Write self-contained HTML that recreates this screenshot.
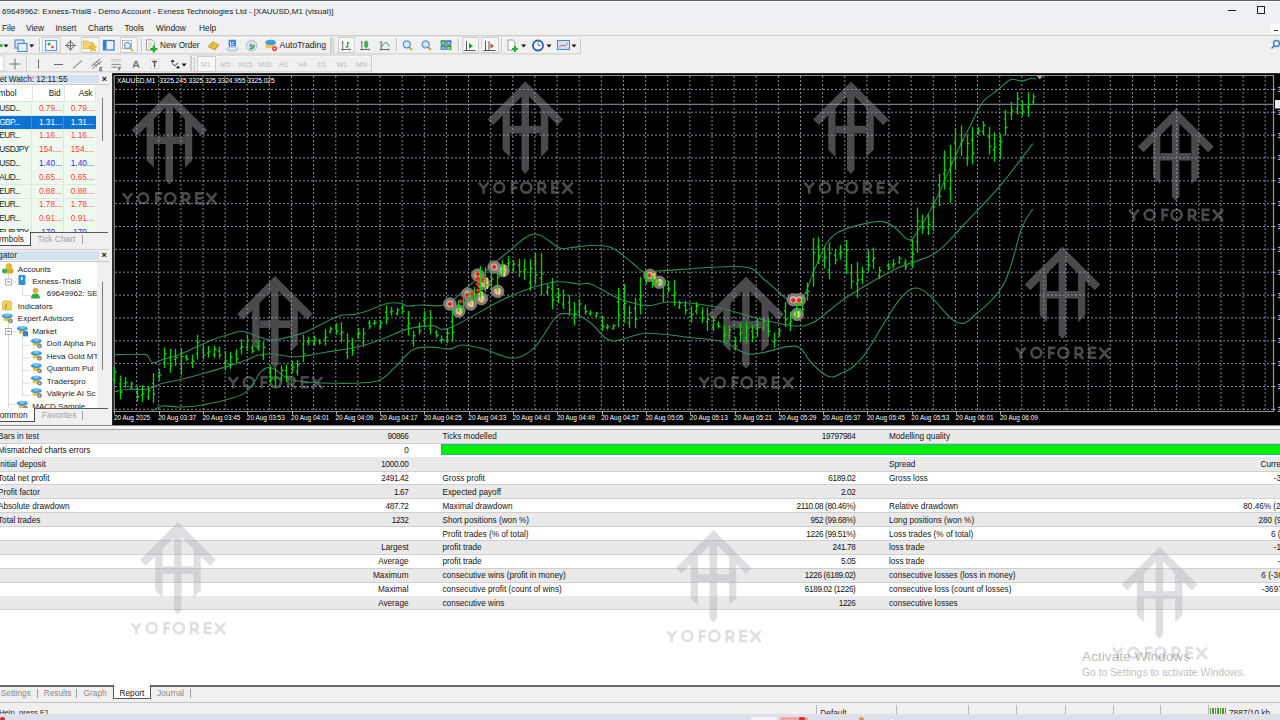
<!DOCTYPE html>
<html><head><meta charset="utf-8"><title>MT4</title>
<style>
*{box-sizing:border-box}
html,body{margin:0;padding:0}
body{width:1280px;height:720px;overflow:hidden;position:relative;background:#f0f0f0;font-family:"Liberation Sans", sans-serif;font-size:8.3px;color:#141414}
.a{position:absolute;white-space:nowrap}
.t{position:absolute;white-space:nowrap;line-height:10px}
.r{text-align:right}
.sep{position:absolute;width:1px;background:#c8c8c8;border-right:1px solid #fff}
.pr{position:absolute;border:1px solid #cfcfcf;background:#f7f7f7}
.dd{position:absolute;width:0;height:0;border-left:2.5px solid transparent;border-right:2.5px solid transparent;border-top:3px solid #111}
.gt{color:#ababab}
</style></head><body>

<div class="a" style="left:0;top:0;width:1280px;height:1.2px;background:#5a6166"></div>
<div class="a" style="left:0;top:1.2px;width:1280px;height:20.2px;background:#edf1f6"></div>
<div class="a" style="left:0;top:1.3px;width:1280px;height:0.9px;background:#ffffff"></div>
<div class="t" style="left:2px;top:6.6px;font-size:8.05px;color:#1a1a1a">69649962: Exness-Trial8 - Demo Account - Exness Technologies Ltd - [XAUUSD,M1 (visual)]</div>
<div class="a" style="left:1228px;top:10px;width:8px;height:1px;background:#222"></div>
<div class="a" style="left:1257px;top:6px;width:8px;height:8px;border:1px solid #222"></div>

<div class="t" style="left:2px;top:23px;font-size:8.4px;color:#1a1a1a">File</div>
<div class="t" style="left:26px;top:23px;font-size:8.4px;color:#1a1a1a">View</div>
<div class="t" style="left:55.5px;top:23px;font-size:8.4px;color:#1a1a1a">Insert</div>
<div class="t" style="left:88px;top:23px;font-size:8.4px;color:#1a1a1a">Charts</div>
<div class="t" style="left:124.5px;top:23px;font-size:8.4px;color:#1a1a1a">Tools</div>
<div class="t" style="left:156px;top:23px;font-size:8.4px;color:#1a1a1a">Window</div>
<div class="t" style="left:199px;top:23px;font-size:8.4px;color:#1a1a1a">Help</div>
<div class="a" style="left:1271px;top:23.7px;width:9px;height:10px;background:#fff"></div><div class="a" style="left:1273.5px;top:29.5px;width:4px;height:1.2px;background:#333"></div>
<div class="a" style="left:0;top:35px;width:1280px;height:1px;background:#cfcfcf"></div>
<svg class="a" style="left:0;top:35px" width="1280" height="38" viewBox="0 35 1280 38"><path d="M0 53.9H330.5V37M330 37.1H0" stroke="#cdcdcd" fill="none"/><path d="M0 37.6H330" stroke="#fbfbfb"/><path d="M331 53.9H580.5V37M331.5 54V37.1H580" stroke="#cdcdcd" fill="none"/><path d="M332 37.6H580" stroke="#fbfbfb"/><rect x="42.5" y="37.5" width="17.6" height="15" fill="#f7f7f7" stroke="#cdcdcd"/><rect x="81.5" y="37.5" width="17.5" height="15" fill="#f7f7f7" stroke="#cdcdcd"/><rect x="120.5" y="37.5" width="16.80000000000001" height="15" fill="#f7f7f7" stroke="#cdcdcd"/><rect x="338.5" y="37.5" width="15.800000000000011" height="15" fill="#f7f7f7" stroke="#cdcdcd"/><rect x="462.9" y="37.5" width="15.600000000000023" height="15" fill="#f7f7f7" stroke="#cdcdcd"/><rect x="481.9" y="37.5" width="16.600000000000023" height="15" fill="#f7f7f7" stroke="#cdcdcd"/><path d="M39.5 38V52" stroke="#c4c4c4"/><path d="M40.5 38V52" stroke="#fff"/><path d="M141.5 38V52" stroke="#c4c4c4"/><path d="M142.5 38V52" stroke="#fff"/><path d="M396.5 38V52" stroke="#c4c4c4"/><path d="M397.5 38V52" stroke="#fff"/><path d="M458.5 38V52" stroke="#c4c4c4"/><path d="M459.5 38V52" stroke="#fff"/><path d="M501.5 38V52" stroke="#c4c4c4"/><path d="M502.5 38V52" stroke="#fff"/><path d="M333.5 38.5V52" stroke="#b0b0b0" stroke-width="1.2" stroke-dasharray="1,0.8"/><path d="M3.5 44.5h5l-2.5 3z" fill="#111"/><path d="M29.2 44.5h5l-2.5 3z" fill="#111"/><path d="M521.1 44.5h5l-2.5 3z" fill="#111"/><path d="M546.5 44.5h5l-2.5 3z" fill="#111"/><path d="M571.5 44.5h5l-2.5 3z" fill="#111"/><rect x="0" y="44" width="2.5" height="3" fill="#2db83d"/><rect x="15" y="40" width="9" height="8" fill="#dbe8f8" stroke="#3f7fd0"/><rect x="18" y="43.5" width="9" height="8" fill="#e8f0fb" stroke="#3f7fd0"/><rect x="45.5" y="40.5" width="11" height="10" fill="#fff" stroke="#5a9be0" stroke-width="1.2"/><circle cx="49" cy="44" r="1.6" fill="#28a745"/><circle cx="52.5" cy="47" r="1.6" fill="#e8603c"/><path d="M70.5 40v11M65 45.5h11" stroke="#707070" stroke-width="1"/><rect x="67.5" y="42.5" width="6" height="6" fill="none" stroke="#7a7a7a" transform="rotate(45 70.5 45.5)"/><path d="M83 41h5l1 1.5h4v6h-10z" fill="#f2d46a" stroke="#c9a640" stroke-width="0.6"/><path d="M93 43.5l1.2 2.6 2.8.3-2.1 1.9.6 2.8-2.5-1.4-2.5 1.4.6-2.8-2.1-1.9 2.8-.3z" fill="#f3c431" stroke="#b78c10" stroke-width="0.4"/><rect x="103.5" y="40.5" width="10.5" height="9.5" fill="#e9f1fb" stroke="#3a78c8" stroke-width="1.2"/><rect x="104" y="41" width="2.5" height="8.5" fill="#3a78c8"/><rect x="122.5" y="40.5" width="9" height="8" fill="#fff" stroke="#8a8a8a" stroke-width="0.6"/><circle cx="127.5" cy="45.5" r="3.2" fill="#dbe8f5" stroke="#4b86c8" stroke-width="1"/><path d="M130 48l3 3" stroke="#d49b2a" stroke-width="1.6"/><path d="M146.5 39.8h5.5l2.5 2.5v7.8h-8z" fill="#fbfbfb" stroke="#7a7a7a" stroke-width="0.7"/><path d="M148 43h4M148 45h4M148 47h3" stroke="#9a9a9a" stroke-width="0.6"/><path d="M153.8 45.6v7M150.3 49.1h7" stroke="#22b035" stroke-width="2.3"/><path d="M208 46.6l5-5.2 6 3.2-4 5.2z" fill="#e6bd3a" stroke="#8a6a10" stroke-width="0.6"/><path d="M213 41.4l6 3.2" stroke="#f6e08a" stroke-width="0.8"/><ellipse cx="232.4" cy="49" rx="5.6" ry="2.2" fill="#dfe6f0" stroke="#7f9cc4" stroke-width="0.7"/><rect x="228.6" y="39.8" width="7.4" height="6.4" rx="0.8" fill="#3c8ad8"/><path d="M230.5 41.5v3.2h3.4M232 42.6h2" stroke="#fff" stroke-width="0.8" fill="none"/><circle cx="251.6" cy="45.6" r="5.4" fill="#d4e2ec" stroke="#9fb6c8" stroke-width="0.8"/><path d="M249.8 48.6q3.6 0.4 4.4-3.6" stroke="#3aa04a" stroke-width="1.6" fill="none"/><circle cx="251" cy="45.4" r="1.4" fill="#6a8aa8"/><path d="M265.6 42.6h10v5.6h-10z" fill="#f0c84a"/><ellipse cx="270.6" cy="42.4" rx="5.2" ry="2.6" fill="#3f9ee0"/><circle cx="274.6" cy="48.6" r="2.9" fill="#e23434" stroke="#fff" stroke-width="0.6"/><circle cx="274.6" cy="48.6" r="1" fill="#fff"/><path d="M342.7 41.5V50.5M341.2 49.5H350.7" stroke="#5a5a5a" stroke-width="0.9" fill="none"/><path d="M341.7 42.5l1-1.2 1 1.2M349.7 48.5l1.2 1-1.2 1" stroke="#5a5a5a" stroke-width="0.6" fill="none"/><path d="M347.6 42v5.2M345.6 47.2h2M347.6 42.6h1.6" stroke="#1aa83a" stroke-width="1.3" fill="none"/><path d="M361.8 41.5V50.5M360.3 49.5H369.8" stroke="#5a5a5a" stroke-width="0.9" fill="none"/><path d="M360.8 42.5l1-1.2 1 1.2M368.8 48.5l1.2 1-1.2 1" stroke="#5a5a5a" stroke-width="0.6" fill="none"/><path d="M366.2 40.2v8.2" stroke="#138a2a" stroke-width="0.7"/><rect x="364.6" y="41.6" width="3.2" height="5.6" rx="1.2" fill="#2ac24a" stroke="#128a2a" stroke-width="0.5"/><path d="M381.1 41.5V50.5M379.6 49.5H389.1" stroke="#5a5a5a" stroke-width="0.9" fill="none"/><path d="M380.1 42.5l1-1.2 1 1.2M388.1 48.5l1.2 1-1.2 1" stroke="#5a5a5a" stroke-width="0.6" fill="none"/><path d="M381.2 47.6Q383 44.2 385 42.8T389.2 46.4" stroke="#3aa55a" stroke-width="1" fill="none"/><path d="M409 47l3 3" stroke="#c9a83a" stroke-width="2"/><circle cx="406.8" cy="44.4" r="3.7" fill="#bfdcf4" stroke="#3b86d0" stroke-width="1"/><path d="M405 44.4h3.6M406.8 42.6v3.6" stroke="#fff" stroke-width="1"/><path d="M427.9 47l3 3" stroke="#c9a83a" stroke-width="2"/><circle cx="425.7" cy="44.4" r="3.7" fill="#bfdcf4" stroke="#3b86d0" stroke-width="1"/><path d="M423.9 44.4h3.6" stroke="#fff" stroke-width="1"/><rect x="440.6" y="40.2" width="5.2" height="4.6" fill="#2f9a3a"/><rect x="446.2" y="40.2" width="5.2" height="4.6" fill="#3a78d0"/><rect x="440.6" y="45.2" width="5.2" height="4.6" fill="#3a78d0"/><rect x="446.2" y="45.2" width="5.2" height="4.6" fill="#2f9a3a"/><path d="M441.8 43h2.8M447.4 43h2.8M441.8 48h2.8M447.4 48h2.8" stroke="#fff" stroke-width="1"/><path d="M464.5 50.5h11M466.5 41v10" stroke="#444" stroke-width="0.9"/><path d="M469 43l4 3-4 3z" fill="#1f9c3a"/><path d="M483.5 50.5h12M485.5 41v10M489 41v10" stroke="#444" stroke-width="0.9"/><path d="M494 46l-3.5-2.5v5z" fill="#d23a3a"/><path d="M508 40h5l2 2v8h-7z" fill="#fff" stroke="#777" stroke-width="0.7"/><path d="M515 46v6M512 49h6" stroke="#27b03a" stroke-width="2.2"/><circle cx="538" cy="45.5" r="5" fill="#fff" stroke="#1f5fbf" stroke-width="1.8"/><path d="M538 42.5v3h2.5" stroke="#1f5fbf" stroke-width="0.8" fill="none"/><rect x="557.5" y="40.5" width="12" height="9" fill="#cfe2f5" stroke="#4a86c8"/><path d="M559 47l3-2 3 1 3-3" stroke="#d84a3a" stroke-width="0.8" fill="none"/><circle cx="1276.5" cy="43.5" r="3" fill="none" stroke="#3e7ed0" stroke-width="1.4"/><path d="M1274.5 45.5l-3 3" stroke="#3e7ed0" stroke-width="1.6"/><path d="M0 71.8H190.5V55.5" stroke="#cdcdcd" fill="none"/><path d="M191.5 71.8V55.5H371.5V71.8H191.5" stroke="#cdcdcd" fill="none"/><path d="M192 56.1H371" stroke="#fbfbfb"/><rect x="-1" y="56" width="5" height="15" fill="#fbfbfb" stroke="#d0d0d0"/><path d="M15 58.5v11M9.5 64h11" stroke="#6a6a6a" stroke-width="0.9"/><path d="M26.5 57V71" stroke="#c4c4c4"/><path d="M27.5 57V71" stroke="#fff"/><path d="M38.5 59.5v9" stroke="#6a6a6a"/><path d="M54 64.5h9" stroke="#6a6a6a"/><path d="M73 68.5l9-8" stroke="#6a6a6a"/><path d="M91.2 66.2l9.2-7.4M92.4 68.6l9.2-7.4M94.2 64l3 2.6M96.8 61.8l3 2.6" stroke="#5a5a5a" stroke-width="0.9" fill="none"/><path d="M102.4 67.6h-2.6v3.2h2.6M99.8 69.2h2.2" stroke="#4a4a4a" stroke-width="0.8" fill="none"/><path d="M111.4 59.6h9.4M111.4 61.2h9.4" stroke="#a8a8a8" stroke-width="0.8" stroke-dasharray="1.2,0.5"/><path d="M111.4 64.4h9.4M111.4 67.2h6" stroke="#6a6a6a" stroke-width="0.8"/><path d="M121 67.2h-2.2v3.4M118.8 68.8h1.8" stroke="#4a4a4a" stroke-width="0.8" fill="none"/><path d="M133.2 67.8L135.6 61.4h0.9L139 67.8M134.3 65.6h3.6" stroke="#6a6a6a" stroke-width="1.3" fill="none"/><rect x="150.5" y="59.5" width="8.2" height="9" fill="#fafafa" stroke="#b8b8b8" stroke-width="0.7" stroke-dasharray="1,0.6"/><path d="M152.2 61.6h4.8M154.6 61.6v5.6" stroke="#555" stroke-width="1.5" fill="none"/><path d="M170.6 61.2l2-1.6 2 1.6-2 1.6z" fill="#333"/><path d="M176 67.4l2-1.6 2 1.6-2 1.6z" fill="#333"/><path d="M172.4 63.6l2.4 2.2 3.4-3" stroke="#333" stroke-width="1" fill="none"/><path d="M181.5 63.5h5l-2.5 3z" fill="#111"/><path d="M194.2 57.5V71" stroke="#b0b0b0" stroke-width="1.2" stroke-dasharray="1,0.8"/><rect x="197.5" y="56.5" width="18" height="15" fill="#f7f7f7" stroke="#cdcdcd"/></svg>
<div class="t" style="left:160px;top:40.5px;font-size:8.2px;color:#1a1a1a">New Order</div>
<div class="t" style="left:279.5px;top:39.7px;font-size:8.6px;color:#1a1a1a">AutoTrading</div>
<div class="t gt" style="left:201px;top:59.6px;font-size:7px;color:#bdbdbd">M1</div>
<div class="t gt" style="left:220.6px;top:59.6px;font-size:7px;color:#bdbdbd">M5</div>
<div class="t gt" style="left:238.6px;top:59.6px;font-size:7px;color:#bdbdbd">M15</div>
<div class="t gt" style="left:258px;top:59.6px;font-size:7px;color:#bdbdbd">M30</div>
<div class="t gt" style="left:279px;top:59.6px;font-size:7px;color:#bdbdbd">H1</div>
<div class="t gt" style="left:298px;top:59.6px;font-size:7px;color:#bdbdbd">H4</div>
<div class="t gt" style="left:317.5px;top:59.6px;font-size:7px;color:#bdbdbd">D1</div>
<div class="t gt" style="left:337px;top:59.6px;font-size:7px;color:#bdbdbd">W1</div>
<div class="t gt" style="left:355.8px;top:59.6px;font-size:7px;color:#bdbdbd">MN</div>
<div class="a" style="left:0;top:73px;width:112px;height:352px;background:#f0f0f0"></div><div class="a" style="left:0;top:74.8px;width:99px;height:8.4px;background:#d3e1f1"></div><div class="t r" style="left:-60px;top:75px;width:127.5px;font-size:8.2px;color:#222">Market Watch: 12:11:55</div><div class="t" style="left:101.8px;top:74px;font-size:9px;color:#111;font-weight:bold">&#215;</div><div class="a" style="left:0;top:84px;width:109px;height:1px;background:#c9c9c9"></div><div class="a" style="left:0;top:85.3px;width:96px;height:15.7px;background:#fff"></div><div class="a" style="left:32.4px;top:85.5px;width:1px;height:15.5px;background:#e3e3e3"></div><div class="a" style="left:63.9px;top:85.5px;width:1px;height:15.5px;background:#e3e3e3"></div><div class="a" style="left:95.4px;top:85.5px;width:1px;height:15.5px;background:#e3e3e3"></div><div class="a" style="left:0;top:101px;width:96px;height:1px;background:#e3e3e3"></div><div class="t r" style="left:-30px;top:87.8px;width:46.5px;font-size:8.3px">Symbol</div><div class="t r" style="left:20px;top:87.8px;width:40.7px;font-size:8.3px">Bid</div><div class="t r" style="left:50px;top:87.8px;width:42.5px;font-size:8.3px">Ask</div><div class="a" style="left:0;top:73px;width:111px;height:159.3px;overflow:hidden"><div class="a" style="left:0;top:29.00px;width:96px;height:13.3px;background:#effaef"></div><div class="a" style="left:31.2px;top:29.00px;width:1px;height:13.8px;background:#dde8dd"></div><div class="a" style="left:63.1px;top:29.00px;width:1px;height:13.8px;background:#dde8dd"></div><div class="a" style="left:0;top:42.30px;width:96px;height:0.6px;background:#dfe8df"></div><div class="t" style="left:-0.8px;top:29.70px;font-size:8.3px;letter-spacing:-0.55px;color:#1e1e1e">USD...</div><div class="t r" style="left:20px;top:29.70px;width:42px;font-size:8.3px;color:#ff3c3c">0.79...</div><div class="t r" style="left:50px;top:29.70px;width:43.8px;font-size:8.3px;color:#ff3c3c">0.79...</div><div class="a" style="left:0;top:42.80px;width:96px;height:13.3px;background:#0a73d4"></div><div class="a" style="left:31.2px;top:42.80px;width:1px;height:13.3px;background:#3d8fdc"></div><div class="a" style="left:63.1px;top:42.80px;width:1px;height:13.3px;background:#3d8fdc"></div><div class="t" style="left:-0.8px;top:43.50px;font-size:8.3px;letter-spacing:-0.55px;color:#ffffff">GBP...</div><div class="t r" style="left:20px;top:43.50px;width:42px;font-size:8.3px;color:#ffffff">1.31...</div><div class="t r" style="left:50px;top:43.50px;width:43.8px;font-size:8.3px;color:#ffffff">1.31...</div><div class="a" style="left:0;top:56.60px;width:96px;height:13.3px;background:#effaef"></div><div class="a" style="left:31.2px;top:56.60px;width:1px;height:13.8px;background:#dde8dd"></div><div class="a" style="left:63.1px;top:56.60px;width:1px;height:13.8px;background:#dde8dd"></div><div class="a" style="left:0;top:69.90px;width:96px;height:0.6px;background:#dfe8df"></div><div class="t" style="left:-0.8px;top:57.30px;font-size:8.3px;letter-spacing:-0.55px;color:#1e1e1e">EUR...</div><div class="t r" style="left:20px;top:57.30px;width:42px;font-size:8.3px;color:#ff3c3c">1.16...</div><div class="t r" style="left:50px;top:57.30px;width:43.8px;font-size:8.3px;color:#ff3c3c">1.16...</div><div class="a" style="left:0;top:70.40px;width:96px;height:13.3px;background:#effaef"></div><div class="a" style="left:31.2px;top:70.40px;width:1px;height:13.8px;background:#dde8dd"></div><div class="a" style="left:63.1px;top:70.40px;width:1px;height:13.8px;background:#dde8dd"></div><div class="a" style="left:0;top:83.70px;width:96px;height:0.6px;background:#dfe8df"></div><div class="t" style="left:-0.8px;top:71.10px;font-size:8.3px;letter-spacing:-0.55px;color:#1e1e1e">USDJPY</div><div class="t r" style="left:20px;top:71.10px;width:42px;font-size:8.3px;color:#ff3c3c">154....</div><div class="t r" style="left:50px;top:71.10px;width:43.8px;font-size:8.3px;color:#ff3c3c">154....</div><div class="a" style="left:0;top:84.20px;width:96px;height:13.3px;background:#effaef"></div><div class="a" style="left:31.2px;top:84.20px;width:1px;height:13.8px;background:#dde8dd"></div><div class="a" style="left:63.1px;top:84.20px;width:1px;height:13.8px;background:#dde8dd"></div><div class="a" style="left:0;top:97.50px;width:96px;height:0.6px;background:#dfe8df"></div><div class="t" style="left:-0.8px;top:84.90px;font-size:8.3px;letter-spacing:-0.55px;color:#1e1e1e">USD...</div><div class="t r" style="left:20px;top:84.90px;width:42px;font-size:8.3px;color:#2b2bf0">1.40...</div><div class="t r" style="left:50px;top:84.90px;width:43.8px;font-size:8.3px;color:#2b2bf0">1.40...</div><div class="a" style="left:0;top:98.00px;width:96px;height:13.3px;background:#effaef"></div><div class="a" style="left:31.2px;top:98.00px;width:1px;height:13.8px;background:#dde8dd"></div><div class="a" style="left:63.1px;top:98.00px;width:1px;height:13.8px;background:#dde8dd"></div><div class="a" style="left:0;top:111.30px;width:96px;height:0.6px;background:#dfe8df"></div><div class="t" style="left:-0.8px;top:98.70px;font-size:8.3px;letter-spacing:-0.55px;color:#1e1e1e">AUD...</div><div class="t r" style="left:20px;top:98.70px;width:42px;font-size:8.3px;color:#ff3c3c">0.65...</div><div class="t r" style="left:50px;top:98.70px;width:43.8px;font-size:8.3px;color:#ff3c3c">0.65...</div><div class="a" style="left:0;top:111.80px;width:96px;height:13.3px;background:#effaef"></div><div class="a" style="left:31.2px;top:111.80px;width:1px;height:13.8px;background:#dde8dd"></div><div class="a" style="left:63.1px;top:111.80px;width:1px;height:13.8px;background:#dde8dd"></div><div class="a" style="left:0;top:125.10px;width:96px;height:0.6px;background:#dfe8df"></div><div class="t" style="left:-0.8px;top:112.50px;font-size:8.3px;letter-spacing:-0.55px;color:#1e1e1e">EUR...</div><div class="t r" style="left:20px;top:112.50px;width:42px;font-size:8.3px;color:#ff3c3c">0.88...</div><div class="t r" style="left:50px;top:112.50px;width:43.8px;font-size:8.3px;color:#ff3c3c">0.88...</div><div class="a" style="left:0;top:125.60px;width:96px;height:13.3px;background:#effaef"></div><div class="a" style="left:31.2px;top:125.60px;width:1px;height:13.8px;background:#dde8dd"></div><div class="a" style="left:63.1px;top:125.60px;width:1px;height:13.8px;background:#dde8dd"></div><div class="a" style="left:0;top:138.90px;width:96px;height:0.6px;background:#dfe8df"></div><div class="t" style="left:-0.8px;top:126.30px;font-size:8.3px;letter-spacing:-0.55px;color:#1e1e1e">EUR...</div><div class="t r" style="left:20px;top:126.30px;width:42px;font-size:8.3px;color:#ff3c3c">1.78...</div><div class="t r" style="left:50px;top:126.30px;width:43.8px;font-size:8.3px;color:#ff3c3c">1.78...</div><div class="a" style="left:0;top:139.40px;width:96px;height:13.3px;background:#effaef"></div><div class="a" style="left:31.2px;top:139.40px;width:1px;height:13.8px;background:#dde8dd"></div><div class="a" style="left:63.1px;top:139.40px;width:1px;height:13.8px;background:#dde8dd"></div><div class="a" style="left:0;top:152.70px;width:96px;height:0.6px;background:#dfe8df"></div><div class="t" style="left:-0.8px;top:140.10px;font-size:8.3px;letter-spacing:-0.55px;color:#1e1e1e">EUR...</div><div class="t r" style="left:20px;top:140.10px;width:42px;font-size:8.3px;color:#ff3c3c">0.91...</div><div class="t r" style="left:50px;top:140.10px;width:43.8px;font-size:8.3px;color:#ff3c3c">0.91...</div><div class="a" style="left:0;top:153.20px;width:96px;height:13.3px;background:#effaef"></div><div class="a" style="left:31.2px;top:153.20px;width:1px;height:13.8px;background:#dde8dd"></div><div class="a" style="left:63.1px;top:153.20px;width:1px;height:13.8px;background:#dde8dd"></div><div class="a" style="left:0;top:166.50px;width:96px;height:0.6px;background:#dfe8df"></div><div class="t" style="left:-0.8px;top:153.90px;font-size:8.3px;letter-spacing:-0.55px;color:#1e1e1e">EURJPY</div><div class="t r" style="left:20px;top:153.90px;width:42px;font-size:8.3px;color:#2b2bf0">170...</div><div class="t r" style="left:50px;top:153.90px;width:43.8px;font-size:8.3px;color:#2b2bf0">170...</div></div><div class="a" style="left:102px;top:97.5px;width:1px;height:43.5px;background:#7a7a7a"></div><div class="a" style="left:30px;top:232px;width:78px;height:1.3px;background:#5a5a5a"></div><div class="a" style="left:0;top:232px;width:31px;height:14px;background:#fff;border-right:1.3px solid #4a4a4a;border-bottom:1.3px solid #4a4a4a"></div><div class="t r" style="left:-20px;top:234px;width:44px;font-size:8.4px;color:#1a1a1a">Symbols</div><div class="t" style="left:37.5px;top:234px;font-size:8.4px;color:#a0a0a0">Tick Chart</div><div class="a" style="left:82px;top:235px;width:1px;height:9px;background:#a0a0a0"></div><div class="a" style="left:0;top:249px;width:109px;height:1px;background:#d0d0d0"></div><div class="a" style="left:0;top:250.6px;width:99px;height:9.4px;background:#d3e1f1"></div><div class="t r" style="left:-30px;top:250.3px;width:47px;font-size:8.3px;color:#222">Navigator</div><div class="t" style="left:101.6px;top:250.3px;font-size:9px;color:#111;font-weight:bold">&#215;</div><div class="a" style="left:0;top:260.5px;width:109px;height:1px;background:#c9c9c9"></div><div class="a" style="left:0;top:261.5px;width:97px;height:146.6px;background:#fff"></div><div class="a" style="left:102px;top:282px;width:1px;height:88px;background:#7a7a7a"></div><svg class="a" style="left:0;top:261.5px" width="97" height="146.6" viewBox="0 261.5 97 146.6"><path d="M8.5 273V278M22.5 286V295H30M8.5 322V408M8.5 331H16M22.5 336V395M22.5 345H30M22.5 357.5H30M22.5 370H30M22.5 382.5H30M22.5 395H30M8.5 404H16M11 281.5H17" stroke="#a8a8a8" stroke-width="0.8" stroke-dasharray="1,1" fill="none"/><rect x="5.5" y="278.5" width="6" height="6" fill="#fff" stroke="#9a9a9a" stroke-width="0.8"/><path d="M7.0 281.5h3" stroke="#3060c0" stroke-width="0.8"/><rect x="5.5" y="328" width="6" height="6" fill="#fff" stroke="#9a9a9a" stroke-width="0.8"/><path d="M7.0 331h3" stroke="#3060c0" stroke-width="0.8"/><circle cx="9" cy="266.1" r="3.3" fill="#e6b832"/><rect x="5" y="268.1" width="8.5" height="5" rx="2" fill="#d9a82a"/><circle cx="4.5" cy="270.6" r="2.5" fill="#2fb84a"/><text x="17.8" y="271.10" font-size="8.05" fill="#1e1e1e" font-family="Liberation Sans">Accounts</text><rect x="18.5" y="274.55" width="7" height="10" rx="1" fill="#2f8fe0"/><rect x="21" y="276.55" width="1.5" height="3" fill="#fff"/><text x="32.2" y="283.55" font-size="8.05" fill="#1e1e1e" font-family="Liberation Sans">Exness-Trial8</text><circle cx="35.5" cy="290.0" r="2.7" fill="#e8b030"/><path d="M31 298.0q0-5 4.5-5q4.5 0 4.5 5z" fill="#2fb040"/><text x="46.7" y="296.00" font-size="8.05" fill="#1e1e1e" font-family="Liberation Sans">69649962: SEC</text><rect x="2.5" y="300.45000000000005" width="9" height="9" rx="1.5" fill="#f3d55a" stroke="#c8a030" stroke-width="0.6"/><text x="5" y="307.95000000000005" font-size="7" font-style="italic" fill="#6a5010" font-family="Liberation Serif">f</text><text x="17.8" y="308.45" font-size="8.05" fill="#1e1e1e" font-family="Liberation Sans">Indicators</text><ellipse cx="7" cy="318.70000000000005" rx="3.4" ry="2" fill="#efc030"/><ellipse cx="7.3" cy="315.50000000000006" rx="5.4" ry="2.5" fill="#3a9be2"/><ellipse cx="7.3" cy="314.50000000000006" rx="2.8" ry="1.5" fill="#7cc4f4"/><circle cx="10.6" cy="320.50000000000006" r="2.1" fill="#8a8a8a" stroke="#5a5a5a" stroke-width="0.4"/><circle cx="10.6" cy="320.50000000000006" r="0.7" fill="#e8e8e8"/><text x="17.8" y="320.90" font-size="8.05" fill="#1e1e1e" font-family="Liberation Sans">Expert Advisors</text><ellipse cx="22" cy="331.15000000000003" rx="3.4" ry="2" fill="#efc030"/><ellipse cx="22.3" cy="327.95000000000005" rx="5.4" ry="2.5" fill="#3a9be2"/><ellipse cx="22.3" cy="326.95000000000005" rx="2.8" ry="1.5" fill="#7cc4f4"/><circle cx="25.6" cy="332.95000000000005" r="2.1" fill="#8a8a8a" stroke="#5a5a5a" stroke-width="0.4"/><circle cx="25.6" cy="332.95000000000005" r="0.7" fill="#e8e8e8"/><rect x="23" y="330.85" width="5" height="5" fill="#3a7ad8"/><text x="32.2" y="333.35" font-size="8.05" fill="#1e1e1e" font-family="Liberation Sans">Market</text><ellipse cx="36" cy="343.6" rx="3.4" ry="2" fill="#efc030"/><ellipse cx="36.3" cy="340.40000000000003" rx="5.4" ry="2.5" fill="#3a9be2"/><ellipse cx="36.3" cy="339.40000000000003" rx="2.8" ry="1.5" fill="#7cc4f4"/><circle cx="39.6" cy="345.40000000000003" r="2.1" fill="#8a8a8a" stroke="#5a5a5a" stroke-width="0.4"/><circle cx="39.6" cy="345.40000000000003" r="0.7" fill="#e8e8e8"/><text x="46.7" y="345.80" font-size="8.05" fill="#1e1e1e" font-family="Liberation Sans">DoIt Alpha Pu</text><ellipse cx="36" cy="356.05" rx="3.4" ry="2" fill="#efc030"/><ellipse cx="36.3" cy="352.85" rx="5.4" ry="2.5" fill="#3a9be2"/><ellipse cx="36.3" cy="351.85" rx="2.8" ry="1.5" fill="#7cc4f4"/><circle cx="39.6" cy="357.85" r="2.1" fill="#8a8a8a" stroke="#5a5a5a" stroke-width="0.4"/><circle cx="39.6" cy="357.85" r="0.7" fill="#e8e8e8"/><text x="46.7" y="358.25" font-size="8.05" fill="#1e1e1e" font-family="Liberation Sans">Heva Gold MT</text><ellipse cx="36" cy="368.50000000000006" rx="3.4" ry="2" fill="#efc030"/><ellipse cx="36.3" cy="365.30000000000007" rx="5.4" ry="2.5" fill="#3a9be2"/><ellipse cx="36.3" cy="364.30000000000007" rx="2.8" ry="1.5" fill="#7cc4f4"/><circle cx="39.6" cy="370.30000000000007" r="2.1" fill="#8a8a8a" stroke="#5a5a5a" stroke-width="0.4"/><circle cx="39.6" cy="370.30000000000007" r="0.7" fill="#e8e8e8"/><text x="46.7" y="370.70" font-size="8.05" fill="#1e1e1e" font-family="Liberation Sans">Quantum Pul</text><ellipse cx="36" cy="380.95000000000005" rx="3.4" ry="2" fill="#efc030"/><ellipse cx="36.3" cy="377.75000000000006" rx="5.4" ry="2.5" fill="#3a9be2"/><ellipse cx="36.3" cy="376.75000000000006" rx="2.8" ry="1.5" fill="#7cc4f4"/><circle cx="39.6" cy="382.75000000000006" r="2.1" fill="#8a8a8a" stroke="#5a5a5a" stroke-width="0.4"/><circle cx="39.6" cy="382.75000000000006" r="0.7" fill="#e8e8e8"/><text x="46.7" y="383.15" font-size="8.05" fill="#1e1e1e" font-family="Liberation Sans">Traderspro</text><ellipse cx="36" cy="393.40000000000003" rx="3.4" ry="2" fill="#efc030"/><ellipse cx="36.3" cy="390.20000000000005" rx="5.4" ry="2.5" fill="#3a9be2"/><ellipse cx="36.3" cy="389.20000000000005" rx="2.8" ry="1.5" fill="#7cc4f4"/><circle cx="39.6" cy="395.20000000000005" r="2.1" fill="#8a8a8a" stroke="#5a5a5a" stroke-width="0.4"/><circle cx="39.6" cy="395.20000000000005" r="0.7" fill="#e8e8e8"/><text x="46.7" y="395.60" font-size="8.05" fill="#1e1e1e" font-family="Liberation Sans">Valkyrie AI Sc</text><ellipse cx="22" cy="405.85" rx="3.4" ry="2" fill="#efc030"/><ellipse cx="22.3" cy="402.65000000000003" rx="5.4" ry="2.5" fill="#3a9be2"/><ellipse cx="22.3" cy="401.65000000000003" rx="2.8" ry="1.5" fill="#7cc4f4"/><circle cx="25.6" cy="407.65000000000003" r="2.1" fill="#8a8a8a" stroke="#5a5a5a" stroke-width="0.4"/><circle cx="25.6" cy="407.65000000000003" r="0.7" fill="#e8e8e8"/><text x="32.2" y="408.05" font-size="8.05" fill="#1e1e1e" font-family="Liberation Sans">MACD Sample</text></svg><div class="a" style="left:34px;top:408px;width:74px;height:1.3px;background:#5a5a5a"></div><div class="a" style="left:0;top:408px;width:35px;height:13.5px;background:#fff;border-right:1.3px solid #4a4a4a;border-bottom:1.3px solid #4a4a4a"></div><div class="t r" style="left:-20px;top:410.2px;width:47.6px;font-size:8.4px;color:#1a1a1a">Common</div><div class="t" style="left:41.9px;top:410.2px;font-size:8.4px;color:#a0a0a0">Favorites</div><div class="a" style="left:82px;top:411px;width:1px;height:9px;background:#a0a0a0"></div>
<svg style="position:absolute;left:112px;top:73px" width="1168" height="352" viewBox="112 73 1168 352">
<rect x="112" y="73" width="1168" height="352" fill="#000"/>
<rect x="112.5" y="73.5" width="1170" height="352" fill="none" stroke="#2a2a2a" stroke-width="1"/>
<g transform="translate(169.4,92.2)" opacity="1.0"><polygon points="0,0 -37.9,37.9 -32.2,43.6 0,11.4 32.2,43.6 37.9,37.9" fill="#4a4a4d"/><polygon points="-22.8,30 -15.5,23 -15.5,75.5 -22.8,68.3" fill="#4a4a4d"/><polygon points="22.8,30 15.5,23 15.5,75.5 22.8,68.3" fill="#4a4a4d"/><polygon points="-3.9,9 3.6,9 3.6,88 -0.15,92.4 -3.9,88" fill="#4a4a4d"/><rect x="-15.5" y="44.3" width="31" height="7.6" fill="#4a4a4d"/><path d="M-46.6,101L-41.8,106.6L-37,101M-41.8,106.6V112.2M-21.25,106.1A4.95,4.95 0 1 0 -31.15,106.1A4.95,4.95 0 1 0 -21.25,106.1M-7.1,101.2H-13.2V112.2M-13.2,106.4H-8M5.9,106.1A5.1,5.1 0 1 0 -4.3,106.1A5.1,5.1 0 1 0 5.9,106.1M13.2,112.2V101.2H16.6A3.2,3.2 0 0 1 16.6,107.6H13.2M16.4,107.6L20.8,112.2M33.9,101.2H27V111H33.9M27,106.1H33.2M37,100.9L47.2,112.2M47.2,100.9L37,112.2" fill="none" stroke="#4a4a4d" stroke-width="2.6"/></g>
<g transform="translate(525.4,81.5)" opacity="1.0"><polygon points="0,0 -37.9,37.9 -32.2,43.6 0,11.4 32.2,43.6 37.9,37.9" fill="#4a4a4d"/><polygon points="-22.8,30 -15.5,23 -15.5,75.5 -22.8,68.3" fill="#4a4a4d"/><polygon points="22.8,30 15.5,23 15.5,75.5 22.8,68.3" fill="#4a4a4d"/><polygon points="-3.9,9 3.6,9 3.6,88 -0.15,92.4 -3.9,88" fill="#4a4a4d"/><rect x="-15.5" y="44.3" width="31" height="7.6" fill="#4a4a4d"/><path d="M-46.6,101L-41.8,106.6L-37,101M-41.8,106.6V112.2M-21.25,106.1A4.95,4.95 0 1 0 -31.15,106.1A4.95,4.95 0 1 0 -21.25,106.1M-7.1,101.2H-13.2V112.2M-13.2,106.4H-8M5.9,106.1A5.1,5.1 0 1 0 -4.3,106.1A5.1,5.1 0 1 0 5.9,106.1M13.2,112.2V101.2H16.6A3.2,3.2 0 0 1 16.6,107.6H13.2M16.4,107.6L20.8,112.2M33.9,101.2H27V111H33.9M27,106.1H33.2M37,100.9L47.2,112.2M47.2,100.9L37,112.2" fill="none" stroke="#4a4a4d" stroke-width="2.6"/></g>
<g transform="translate(851.0,81.5)" opacity="1.0"><polygon points="0,0 -37.9,37.9 -32.2,43.6 0,11.4 32.2,43.6 37.9,37.9" fill="#4a4a4d"/><polygon points="-22.8,30 -15.5,23 -15.5,75.5 -22.8,68.3" fill="#4a4a4d"/><polygon points="22.8,30 15.5,23 15.5,75.5 22.8,68.3" fill="#4a4a4d"/><polygon points="-3.9,9 3.6,9 3.6,88 -0.15,92.4 -3.9,88" fill="#4a4a4d"/><rect x="-15.5" y="44.3" width="31" height="7.6" fill="#4a4a4d"/><path d="M-46.6,101L-41.8,106.6L-37,101M-41.8,106.6V112.2M-21.25,106.1A4.95,4.95 0 1 0 -31.15,106.1A4.95,4.95 0 1 0 -21.25,106.1M-7.1,101.2H-13.2V112.2M-13.2,106.4H-8M5.9,106.1A5.1,5.1 0 1 0 -4.3,106.1A5.1,5.1 0 1 0 5.9,106.1M13.2,112.2V101.2H16.6A3.2,3.2 0 0 1 16.6,107.6H13.2M16.4,107.6L20.8,112.2M33.9,101.2H27V111H33.9M27,106.1H33.2M37,100.9L47.2,112.2M47.2,100.9L37,112.2" fill="none" stroke="#4a4a4d" stroke-width="2.6"/></g>
<g transform="translate(1175.8,108.7)" opacity="1.0"><polygon points="0,0 -37.9,37.9 -32.2,43.6 0,11.4 32.2,43.6 37.9,37.9" fill="#4a4a4d"/><polygon points="-22.8,30 -15.5,23 -15.5,75.5 -22.8,68.3" fill="#4a4a4d"/><polygon points="22.8,30 15.5,23 15.5,75.5 22.8,68.3" fill="#4a4a4d"/><polygon points="-3.9,9 3.6,9 3.6,88 -0.15,92.4 -3.9,88" fill="#4a4a4d"/><rect x="-15.5" y="44.3" width="31" height="7.6" fill="#4a4a4d"/><path d="M-46.6,101L-41.8,106.6L-37,101M-41.8,106.6V112.2M-21.25,106.1A4.95,4.95 0 1 0 -31.15,106.1A4.95,4.95 0 1 0 -21.25,106.1M-7.1,101.2H-13.2V112.2M-13.2,106.4H-8M5.9,106.1A5.1,5.1 0 1 0 -4.3,106.1A5.1,5.1 0 1 0 5.9,106.1M13.2,112.2V101.2H16.6A3.2,3.2 0 0 1 16.6,107.6H13.2M16.4,107.6L20.8,112.2M33.9,101.2H27V111H33.9M27,106.1H33.2M37,100.9L47.2,112.2M47.2,100.9L37,112.2" fill="none" stroke="#4a4a4d" stroke-width="2.6"/></g>
<g transform="translate(275.0,276.1)" opacity="1.0"><polygon points="0,0 -37.9,37.9 -32.2,43.6 0,11.4 32.2,43.6 37.9,37.9" fill="#4a4a4d"/><polygon points="-22.8,30 -15.5,23 -15.5,75.5 -22.8,68.3" fill="#4a4a4d"/><polygon points="22.8,30 15.5,23 15.5,75.5 22.8,68.3" fill="#4a4a4d"/><polygon points="-3.9,9 3.6,9 3.6,88 -0.15,92.4 -3.9,88" fill="#4a4a4d"/><rect x="-15.5" y="44.3" width="31" height="7.6" fill="#4a4a4d"/><path d="M-46.6,101L-41.8,106.6L-37,101M-41.8,106.6V112.2M-21.25,106.1A4.95,4.95 0 1 0 -31.15,106.1A4.95,4.95 0 1 0 -21.25,106.1M-7.1,101.2H-13.2V112.2M-13.2,106.4H-8M5.9,106.1A5.1,5.1 0 1 0 -4.3,106.1A5.1,5.1 0 1 0 5.9,106.1M13.2,112.2V101.2H16.6A3.2,3.2 0 0 1 16.6,107.6H13.2M16.4,107.6L20.8,112.2M33.9,101.2H27V111H33.9M27,106.1H33.2M37,100.9L47.2,112.2M47.2,100.9L37,112.2" fill="none" stroke="#4a4a4d" stroke-width="2.6"/></g>
<g transform="translate(746.0,276.4)" opacity="1.0"><polygon points="0,0 -37.9,37.9 -32.2,43.6 0,11.4 32.2,43.6 37.9,37.9" fill="#4a4a4d"/><polygon points="-22.8,30 -15.5,23 -15.5,75.5 -22.8,68.3" fill="#4a4a4d"/><polygon points="22.8,30 15.5,23 15.5,75.5 22.8,68.3" fill="#4a4a4d"/><polygon points="-3.9,9 3.6,9 3.6,88 -0.15,92.4 -3.9,88" fill="#4a4a4d"/><rect x="-15.5" y="44.3" width="31" height="7.6" fill="#4a4a4d"/><path d="M-46.6,101L-41.8,106.6L-37,101M-41.8,106.6V112.2M-21.25,106.1A4.95,4.95 0 1 0 -31.15,106.1A4.95,4.95 0 1 0 -21.25,106.1M-7.1,101.2H-13.2V112.2M-13.2,106.4H-8M5.9,106.1A5.1,5.1 0 1 0 -4.3,106.1A5.1,5.1 0 1 0 5.9,106.1M13.2,112.2V101.2H16.6A3.2,3.2 0 0 1 16.6,107.6H13.2M16.4,107.6L20.8,112.2M33.9,101.2H27V111H33.9M27,106.1H33.2M37,100.9L47.2,112.2M47.2,100.9L37,112.2" fill="none" stroke="#4a4a4d" stroke-width="2.6"/></g>
<g transform="translate(1062.5,246.7)" opacity="1.0"><polygon points="0,0 -37.9,37.9 -32.2,43.6 0,11.4 32.2,43.6 37.9,37.9" fill="#4a4a4d"/><polygon points="-22.8,30 -15.5,23 -15.5,75.5 -22.8,68.3" fill="#4a4a4d"/><polygon points="22.8,30 15.5,23 15.5,75.5 22.8,68.3" fill="#4a4a4d"/><polygon points="-3.9,9 3.6,9 3.6,88 -0.15,92.4 -3.9,88" fill="#4a4a4d"/><rect x="-15.5" y="44.3" width="31" height="7.6" fill="#4a4a4d"/><path d="M-46.6,101L-41.8,106.6L-37,101M-41.8,106.6V112.2M-21.25,106.1A4.95,4.95 0 1 0 -31.15,106.1A4.95,4.95 0 1 0 -21.25,106.1M-7.1,101.2H-13.2V112.2M-13.2,106.4H-8M5.9,106.1A5.1,5.1 0 1 0 -4.3,106.1A5.1,5.1 0 1 0 5.9,106.1M13.2,112.2V101.2H16.6A3.2,3.2 0 0 1 16.6,107.6H13.2M16.4,107.6L20.8,112.2M33.9,101.2H27V111H33.9M27,106.1H33.2M37,100.9L47.2,112.2M47.2,100.9L37,112.2" fill="none" stroke="#4a4a4d" stroke-width="2.6"/></g>
<path d="M136.6 76V411M158.7 76V411M180.9 76V411M203.0 76V411M225.1 76V411M247.2 76V411M269.4 76V411M291.5 76V411M313.6 76V411M335.8 76V411M357.9 76V411M380.0 76V411M402.2 76V411M424.3 76V411M446.4 76V411M468.5 76V411M490.7 76V411M512.8 76V411M534.9 76V411M557.1 76V411M579.2 76V411M601.3 76V411M623.5 76V411M645.6 76V411M667.7 76V411M689.8 76V411M712.0 76V411M734.1 76V411M756.2 76V411M778.4 76V411M800.5 76V411M822.6 76V411M844.8 76V411M866.9 76V411M889.0 76V411M911.1 76V411M933.3 76V411M955.4 76V411M977.5 76V411M999.7 76V411M1021.8 76V411M1043.9 76V411M1066.1 76V411M1088.2 76V411M1110.3 76V411M1132.5 76V411M1154.6 76V411M1176.7 76V411M1198.8 76V411M1221.0 76V411M1243.1 76V411M1265.2 76V411M115 89.4H1273M115 112.2H1273M115 135.1H1273M115 157.9H1273M115 180.8H1273M115 203.6H1273M115 226.5H1273M115 249.3H1273M115 272.2H1273M115 295.1H1273M115 317.9H1273M115 340.8H1273M115 363.6H1273M115 386.5H1273M115 409.3H1273" stroke="#8c9aa8" stroke-width="1" stroke-dasharray="2,2" fill="none" opacity="0.9"/>
<path d="M115 104.3H1273" stroke="#8a96a4" stroke-width="1"/>
<path d="M114.2 75.5V411.5H1273.5V75.5H114.2" stroke="#949494" stroke-width="1.2" fill="none"/>
<path d="M114.0,354.7C119.0,354.6 138.5,354.0 144.2,354.4C149.9,354.8 147.0,355.6 148.4,357.0C149.8,358.4 150.3,362.5 152.7,362.9C155.1,363.3 158.3,360.9 162.8,359.5C167.3,358.1 174.2,356.5 179.8,354.4C185.5,352.3 191.0,349.3 196.7,346.8C202.3,344.3 208.6,341.2 213.7,339.2C218.8,337.2 222.5,336.2 227.3,334.9C232.1,333.6 237.7,331.0 242.5,331.2C247.3,331.4 251.1,334.3 256.0,335.8C260.9,337.3 264.9,340.2 272.0,340.0C279.1,339.8 291.8,336.4 298.9,334.4C306.0,332.4 307.7,330.9 314.4,327.8C321.1,324.7 332.2,318.2 338.9,316.0C345.6,313.8 349.6,315.3 354.4,314.4C359.2,313.5 362.2,312.5 367.8,310.7C373.4,308.9 382.3,304.5 387.8,303.3C393.3,302.1 397.7,302.9 401.0,303.3C404.3,303.8 404.5,305.7 407.8,306.0C411.1,306.3 414.7,305.3 421.0,305.0C427.3,304.7 437.4,307.7 445.6,304.4C453.8,301.1 459.8,293.6 470.0,285.0C480.2,276.4 496.0,261.5 506.7,253.0C517.4,244.5 525.7,234.9 534.4,234.0C543.1,233.1 553.1,245.5 559.0,247.8C564.9,250.1 564.5,248.2 570.0,247.8C575.5,247.4 585.0,245.5 592.0,245.5C599.0,245.5 605.2,245.1 611.7,247.8C618.2,250.5 625.5,257.5 631.0,261.7C636.5,265.9 639.9,271.3 645.0,272.8C650.1,274.3 645.5,271.8 661.7,270.8C677.9,269.8 724.9,265.2 742.0,266.7C759.1,268.2 756.9,274.3 764.4,279.7C771.9,285.1 781.1,294.8 786.7,299.0C792.3,303.2 794.6,306.2 797.8,305.0C801.0,303.8 803.2,297.8 806.0,292.0C808.8,286.2 810.6,278.7 814.4,270.0C818.2,261.3 823.3,247.0 829.0,240.0C834.7,233.0 840.1,231.1 848.6,228.0C857.1,224.9 872.4,221.6 880.0,221.4C887.6,221.2 889.4,224.0 894.0,227.0C898.6,230.0 904.1,238.2 907.8,239.4C911.5,240.6 911.4,240.5 916.0,234.0C920.6,227.5 928.5,214.4 935.5,200.5C942.5,186.6 951.8,163.4 957.8,150.5C963.8,137.6 967.5,130.9 971.7,122.8C975.9,114.7 978.6,107.3 982.8,102.0C987.0,96.7 992.1,94.5 996.7,90.8C1001.3,87.1 1006.3,81.3 1010.5,79.7C1014.7,78.1 1018.2,81.2 1021.7,81.0C1025.2,80.8 1029.0,78.6 1031.4,78.3C1033.8,78.0 1035.2,78.9 1036.0,79.0" fill="none" stroke="#2e8b57" stroke-width="1.1"/>
<path d="M114.5,391.7C116.9,391.3 123.8,389.6 129.0,389.2C134.2,388.8 140.4,390.2 146.0,389.2C151.6,388.2 157.2,384.8 162.8,383.2C168.4,381.6 172.7,381.5 179.8,379.8C186.9,378.1 196.7,375.4 205.2,373.0C213.7,370.6 223.5,367.6 230.6,365.4C237.7,363.1 243.1,361.2 247.6,359.5C252.1,357.8 253.7,356.2 257.8,355.3C261.9,354.4 265.5,353.8 272.0,354.0C278.5,354.2 287.8,357.0 296.7,356.7C305.6,356.4 315.2,353.9 325.6,352.2C336.0,350.5 348.9,349.1 358.9,346.7C368.9,344.3 377.5,340.8 385.6,337.8C393.8,334.8 400.0,330.9 407.8,328.9C415.6,326.9 425.2,325.8 432.2,325.6C439.2,325.4 437.6,332.4 450.0,327.8C462.4,323.2 489.9,305.4 506.7,297.8C523.5,290.2 538.8,284.8 551.0,282.5C563.2,280.2 573.2,283.7 580.0,284.0C586.8,284.3 585.3,281.9 592.0,284.4C598.7,286.9 610.7,295.5 620.0,299.0C629.3,302.5 639.5,305.1 647.8,305.6C656.1,306.1 658.9,301.8 670.0,302.0C681.1,302.2 698.7,303.7 714.4,306.7C730.1,309.7 750.8,316.8 764.4,320.0C778.0,323.2 787.9,325.6 796.0,326.0C804.1,326.4 807.3,325.2 813.0,322.5C818.7,319.8 824.1,314.4 830.0,310.0C835.9,305.6 837.5,302.9 848.6,296.0C859.7,289.1 882.2,275.8 896.7,268.6C911.2,261.4 924.5,260.2 935.5,253.0C946.5,245.8 952.4,236.6 963.0,225.5C973.6,214.4 987.8,200.3 999.4,186.7C1011.0,173.0 1027.2,150.8 1032.8,143.6" fill="none" stroke="#2e8b57" stroke-width="1.1"/>
<path d="M151.8,411.2C153.6,410.3 158.1,406.7 162.8,406.0C167.5,405.3 174.2,407.0 179.8,407.0C185.5,407.0 191.0,406.7 196.7,406.0C202.3,405.3 208.0,403.9 213.7,402.7C219.3,401.4 225.5,400.1 230.6,398.5C235.7,396.9 240.5,395.6 244.2,393.4C247.9,391.1 249.9,388.7 252.7,385.0C255.5,381.3 258.0,374.2 261.2,371.4C264.4,368.6 266.8,366.6 272.0,368.0C277.2,369.4 281.4,377.4 292.2,380.0C303.0,382.6 322.6,383.1 336.7,383.3C350.8,383.5 367.1,383.6 376.7,381.0C386.3,378.4 388.5,373.0 394.4,367.8C400.3,362.6 406.3,353.4 412.2,350.0C418.1,346.6 423.7,347.3 430.0,347.1C436.3,346.9 444.7,349.2 450.0,348.9C455.3,348.5 456.3,345.0 462.0,345.0C467.7,345.0 475.5,346.8 484.0,349.0C492.5,351.2 504.6,358.5 513.0,358.2C521.5,357.9 527.5,354.2 534.7,347.3C541.9,340.4 550.4,322.2 556.4,316.6C562.4,311.1 566.9,314.1 570.8,314.0C574.7,313.9 576.5,314.3 580.0,316.0C583.5,317.7 586.7,319.9 592.0,324.0C597.3,328.1 602.7,339.2 611.7,340.8C620.7,342.4 633.0,333.9 646.0,333.3C659.0,332.8 677.2,336.1 690.0,337.5C702.8,338.9 713.0,338.9 723.0,341.7C733.0,344.5 739.5,353.3 750.0,354.2C760.5,355.1 777.7,347.9 786.0,346.9C794.3,345.9 795.8,345.4 800.0,348.0C804.2,350.6 806.4,357.8 811.0,362.5C815.6,367.2 822.7,374.1 827.5,376.0C832.3,377.9 834.1,377.2 840.0,374.0C845.9,370.8 851.0,370.9 863.0,356.7C875.0,342.5 896.4,294.5 911.8,288.7C927.2,282.9 945.0,317.3 955.5,321.7C966.0,326.1 966.9,321.3 975.0,315.0C983.1,308.7 996.2,298.2 1004.0,283.8C1011.8,269.4 1016.9,240.8 1021.7,228.3C1026.5,215.8 1031.0,212.1 1032.8,208.9" fill="none" stroke="#2e8b57" stroke-width="1.1"/>
<circle cx="449.9" cy="304" r="6.3" fill="#8c7c6c" stroke="#9aa4b0" stroke-width="0.6" opacity="0.95"/>
<circle cx="458.9" cy="311" r="6.3" fill="#8c7c6c" stroke="#9aa4b0" stroke-width="0.6" opacity="0.95"/>
<circle cx="470.6" cy="304" r="6.3" fill="#8c7c6c" stroke="#9aa4b0" stroke-width="0.6" opacity="0.95"/>
<circle cx="467.8" cy="294" r="6.3" fill="#8c7c6c" stroke="#9aa4b0" stroke-width="0.6" opacity="0.95"/>
<circle cx="477.8" cy="275" r="6.3" fill="#8c7c6c" stroke="#9aa4b0" stroke-width="0.6" opacity="0.95"/>
<circle cx="483.5" cy="283.5" r="6.3" fill="#8c7c6c" stroke="#9aa4b0" stroke-width="0.6" opacity="0.95"/>
<circle cx="481.5" cy="298.6" r="6.3" fill="#8c7c6c" stroke="#9aa4b0" stroke-width="0.6" opacity="0.95"/>
<circle cx="497.7" cy="291.4" r="6.3" fill="#8c7c6c" stroke="#9aa4b0" stroke-width="0.6" opacity="0.95"/>
<circle cx="494.1" cy="267" r="6.3" fill="#8c7c6c" stroke="#9aa4b0" stroke-width="0.6" opacity="0.95"/>
<circle cx="503.1" cy="270.6" r="6.3" fill="#8c7c6c" stroke="#9aa4b0" stroke-width="0.6" opacity="0.95"/>
<circle cx="650" cy="275.3" r="6.3" fill="#8c7c6c" stroke="#9aa4b0" stroke-width="0.6" opacity="0.95"/>
<circle cx="659.3" cy="282.3" r="6.3" fill="#8c7c6c" stroke="#9aa4b0" stroke-width="0.6" opacity="0.95"/>
<circle cx="793.3" cy="299.7" r="6.3" fill="#8c7c6c" stroke="#9aa4b0" stroke-width="0.6" opacity="0.95"/>
<circle cx="799.4" cy="299.7" r="6.3" fill="#8c7c6c" stroke="#9aa4b0" stroke-width="0.6" opacity="0.95"/>
<circle cx="797.2" cy="314.4" r="6.3" fill="#8c7c6c" stroke="#9aa4b0" stroke-width="0.6" opacity="0.95"/>
<circle cx="449.9" cy="304" r="3.6" fill="#e8e0d6" opacity="0.55"/>
<circle cx="458.9" cy="311" r="3.6" fill="#e8e0d6" opacity="0.55"/>
<circle cx="470.6" cy="304" r="3.6" fill="#e8e0d6" opacity="0.55"/>
<circle cx="467.8" cy="294" r="3.6" fill="#e8e0d6" opacity="0.55"/>
<circle cx="477.8" cy="275" r="3.6" fill="#e8e0d6" opacity="0.55"/>
<circle cx="483.5" cy="283.5" r="3.6" fill="#e8e0d6" opacity="0.55"/>
<circle cx="481.5" cy="298.6" r="3.6" fill="#e8e0d6" opacity="0.55"/>
<circle cx="497.7" cy="291.4" r="3.6" fill="#e8e0d6" opacity="0.55"/>
<circle cx="494.1" cy="267" r="3.6" fill="#e8e0d6" opacity="0.55"/>
<circle cx="503.1" cy="270.6" r="3.6" fill="#e8e0d6" opacity="0.55"/>
<circle cx="650" cy="275.3" r="3.6" fill="#e8e0d6" opacity="0.55"/>
<circle cx="659.3" cy="282.3" r="3.6" fill="#e8e0d6" opacity="0.55"/>
<circle cx="793.3" cy="299.7" r="3.6" fill="#e8e0d6" opacity="0.55"/>
<circle cx="799.4" cy="299.7" r="3.6" fill="#e8e0d6" opacity="0.55"/>
<circle cx="797.2" cy="314.4" r="3.6" fill="#e8e0d6" opacity="0.55"/>
<path d="M447.29999999999995 304L449.9 301.4L452.5 304L449.9 306.6z" fill="#ff1a1a"/>
<path d="M458.09999999999997 301.3L460.7 298.7L463.3 301.3L460.7 303.90000000000003z" fill="#ff1a1a"/>
<path d="M464.4 295L467 292.4L469.6 295L467 297.6z" fill="#ff1a1a"/>
<path d="M469.79999999999995 294L472.4 291.4L475.0 294L472.4 296.6z" fill="#ff1a1a"/>
<path d="M475.2 274.2L477.8 271.59999999999997L480.40000000000003 274.2L477.8 276.8z" fill="#ff1a1a"/>
<path d="M475.2 278.7L477.8 276.09999999999997L480.40000000000003 278.7L477.8 281.3z" fill="#ff1a1a"/>
<path d="M475.2 284.2L477.8 281.59999999999997L480.40000000000003 284.2L477.8 286.8z" fill="#ff1a1a"/>
<path d="M475.2 290.5L477.8 287.9L480.40000000000003 290.5L477.8 293.1z" fill="#ff1a1a"/>
<path d="M480.59999999999997 280.5L483.2 277.9L485.8 280.5L483.2 283.1z" fill="#ff1a1a"/>
<path d="M491.5 267L494.1 264.4L496.70000000000005 267L494.1 269.6z" fill="#ff1a1a"/>
<path d="M646.6999999999999 275.5L649.3 272.9L651.9 275.5L649.3 278.1z" fill="#ff1a1a"/>
<path d="M790.6999999999999 300.3L793.3 297.7L795.9 300.3L793.3 302.90000000000003z" fill="#ff1a1a"/>
<path d="M796.3 300.3L798.9 297.7L801.5 300.3L798.9 302.90000000000003z" fill="#ff1a1a"/>
<path d="M456.7 312L460.7 309V315z" fill="#f0b020" stroke="#fff6d0" stroke-width="0.5"/>
<path d="M468.40000000000003 304L472.40000000000003 301V307z" fill="#f0b020" stroke="#fff6d0" stroke-width="0.5"/>
<path d="M478.3 294L482.3 291V297z" fill="#f0b020" stroke="#fff6d0" stroke-width="0.5"/>
<path d="M478.3 299.5L482.3 296.5V302.5z" fill="#f0b020" stroke="#fff6d0" stroke-width="0.5"/>
<path d="M483.8 280.5L487.8 277.5V283.5z" fill="#f0b020" stroke="#fff6d0" stroke-width="0.5"/>
<path d="M483.8 286L487.8 283V289z" fill="#f0b020" stroke="#fff6d0" stroke-width="0.5"/>
<path d="M495.5 291.4L499.5 288.4V294.4z" fill="#f0b020" stroke="#fff6d0" stroke-width="0.5"/>
<path d="M500.90000000000003 268L504.90000000000003 265V271z" fill="#f0b020" stroke="#fff6d0" stroke-width="0.5"/>
<path d="M500.90000000000003 273.3L504.90000000000003 270.3V276.3z" fill="#f0b020" stroke="#fff6d0" stroke-width="0.5"/>
<path d="M651.0 276L655.0 273V279z" fill="#f0b020" stroke="#fff6d0" stroke-width="0.5"/>
<path d="M656.0999999999999 282.3L660.0999999999999 279.3V285.3z" fill="#f0b020" stroke="#fff6d0" stroke-width="0.5"/>
<path d="M794.6999999999999 314.4L798.6999999999999 311.4V317.4z" fill="#f0b020" stroke="#fff6d0" stroke-width="0.5"/>
<path d="M114.5 367.0V384.0M114.5 372.1h2M114.5 379.8h-1.6M120.5 375.6V399.3M120.5 392.2h2M120.5 383.9h-1.6M125.5 377.0V388.0M125.5 382.5h2M125.5 383.6h-1.6M131.5 381.5V389.0M131.5 383.8h2M131.5 387.1h-1.6M137.5 386.6V401.0M137.5 396.7h2M137.5 391.6h-1.6M142.5 385.0V402.0M142.5 393.5h2M142.5 395.2h-1.6M148.5 386.6V400.0M148.5 390.6h2M148.5 396.6h-1.6M153.5 373.0V402.7M153.5 393.8h2M153.5 383.4h-1.6M159.5 369.0V380.7M159.5 374.9h2M159.5 376.0h-1.6M164.5 347.6V368.0M164.5 353.7h2M164.5 362.9h-1.6M170.5 349.0V373.0M170.5 365.8h2M170.5 357.4h-1.6M175.5 349.0V366.0M175.5 357.5h2M175.5 359.2h-1.6M181.5 348.5V374.7M181.5 356.4h2M181.5 368.1h-1.6M186.5 354.4V361.0M186.5 359.0h2M186.5 356.7h-1.6M192.5 354.4V368.0M192.5 361.2h2M192.5 362.6h-1.6M197.5 335.0V359.5M197.5 342.4h2M197.5 353.4h-1.6M203.5 345.0V359.5M203.5 355.1h2M203.5 350.1h-1.6M208.5 346.0V357.8M208.5 351.9h2M208.5 353.1h-1.6M214.5 346.0V357.8M214.5 349.5h2M214.5 354.9h-1.6M219.5 346.8V358.6M219.5 355.1h2M219.5 350.9h-1.6M225.5 351.0V370.5M225.5 360.8h2M225.5 362.7h-1.6M230.5 351.9V368.8M230.5 357.0h2M230.5 364.6h-1.6M236.5 349.0V362.9M236.5 358.7h2M236.5 353.9h-1.6M241.5 339.0V354.4M241.5 346.7h2M241.5 348.2h-1.6M247.5 335.0V351.0M247.5 339.8h2M247.5 347.0h-1.6M252.5 345.0V353.6M252.5 351.0h2M252.5 348.0h-1.6M258.5 340.8V351.0M258.5 345.9h2M258.5 346.9h-1.6M263.5 341.7V360.3M263.5 347.3h2M263.5 355.6h-1.6M270.5 365.6V382.0M270.5 377.1h2M270.5 371.3h-1.6M275.5 367.8V387.8M275.5 377.8h2M275.5 379.8h-1.6M281.5 365.6V382.0M281.5 370.5h2M281.5 377.9h-1.6M286.5 364.4V382.0M286.5 376.7h2M286.5 370.6h-1.6M292.5 361.0V373.0M292.5 367.0h2M292.5 368.2h-1.6M297.5 360.0V375.6M297.5 364.7h2M297.5 371.7h-1.6M303.5 334.4V362.2M303.5 353.9h2M303.5 344.1h-1.6M308.5 336.7V345.6M308.5 341.1h2M308.5 342.0h-1.6M314.5 335.6V345.6M314.5 338.6h2M314.5 343.1h-1.6M319.5 338.9V344.4M319.5 342.8h2M319.5 340.8h-1.6M325.5 328.9V345.6M325.5 337.2h2M325.5 338.9h-1.6M330.5 326.7V333.3M330.5 328.7h2M330.5 331.6h-1.6M336.5 323.3V334.4M336.5 331.1h2M336.5 327.2h-1.6M341.5 322.2V342.2M341.5 332.2h2M341.5 334.2h-1.6M347.5 333.3V358.9M347.5 341.0h2M347.5 352.5h-1.6M352.5 337.8V355.6M352.5 350.3h2M352.5 344.0h-1.6M358.5 327.8V338.9M358.5 333.4h2M358.5 334.5h-1.6M363.5 327.8V346.7M363.5 333.5h2M363.5 342.0h-1.6M369.5 320.0V328.9M369.5 326.2h2M369.5 323.1h-1.6M374.5 320.0V325.6M374.5 322.8h2M374.5 323.4h-1.6M380.5 320.0V328.9M380.5 322.7h2M380.5 326.7h-1.6M386.5 305.6V324.4M386.5 318.8h2M386.5 312.2h-1.6M391.5 306.7V315.6M391.5 311.1h2M391.5 312.0h-1.6M397.5 307.8V315.6M397.5 310.1h2M397.5 313.7h-1.6M402.5 304.4V314.4M402.5 311.4h2M402.5 307.9h-1.6M408.5 311.0V335.6M408.5 323.3h2M408.5 325.8h-1.6M413.5 331.0V346.7M413.5 335.7h2M413.5 342.8h-1.6M419.5 322.2V334.4M419.5 330.7h2M419.5 326.5h-1.6M424.5 311.0V326.7M424.5 318.9h2M424.5 320.4h-1.6M430.5 310.0V334.4M430.5 317.3h2M430.5 328.3h-1.6M436.5 330.0V337.8M436.5 335.5h2M436.5 332.7h-1.6M441.5 335.6V343.3M441.5 339.5h2M441.5 340.2h-1.6M447.5 328.9V343.3M447.5 333.2h2M447.5 339.7h-1.6M452.5 310.0V342.0M452.5 332.4h2M452.5 321.2h-1.6M458.5 300.5V311.7M458.5 306.1h2M458.5 307.2h-1.6M463.5 297.8V311.7M463.5 302.0h2M463.5 308.2h-1.6M469.5 290.8V303.0M469.5 299.3h2M469.5 295.1h-1.6M474.5 286.7V300.5M474.5 293.6h2M474.5 295.0h-1.6M480.5 265.8V297.8M480.5 275.4h2M480.5 289.8h-1.6M485.5 267.2V292.2M485.5 284.7h2M485.5 275.9h-1.6M491.5 268.6V289.4M491.5 279.0h2M491.5 281.1h-1.6M497.5 271.4V290.8M497.5 277.2h2M497.5 285.9h-1.6M502.5 260.3V275.5M502.5 270.9h2M502.5 265.6h-1.6M508.5 256.0V268.6M508.5 262.3h2M508.5 263.6h-1.6M513.5 260.3V272.8M513.5 264.1h2M513.5 269.7h-1.6M519.5 258.9V277.0M519.5 271.6h2M519.5 265.2h-1.6M524.5 258.9V279.7M524.5 269.3h2M524.5 271.4h-1.6M530.5 258.9V290.8M530.5 268.5h2M530.5 282.8h-1.6M535.5 253.0V284.0M535.5 274.7h2M535.5 263.9h-1.6M541.5 253.0V295.0M541.5 274.0h2M541.5 278.2h-1.6M547.5 283.9V295.0M547.5 287.2h2M547.5 292.2h-1.6M552.5 278.0V309.0M552.5 299.7h2M552.5 288.9h-1.6M558.5 288.0V303.3M558.5 295.6h2M558.5 297.2h-1.6M563.5 289.4V308.9M563.5 295.2h2M563.5 304.0h-1.6M569.5 295.0V315.8M569.5 309.6h2M569.5 302.3h-1.6M574.5 302.0V325.5M574.5 313.8h2M574.5 316.1h-1.6M579.5 299.0V315.8M579.5 304.0h2M579.5 311.6h-1.6M585.5 304.7V314.4M585.5 311.5h2M585.5 308.1h-1.6M590.5 310.3V315.8M590.5 313.1h2M590.5 313.6h-1.6M596.5 311.7V317.2M596.5 313.3h2M596.5 315.8h-1.6M602.5 315.8V331.0M602.5 326.4h2M602.5 321.1h-1.6M607.5 324.0V329.7M607.5 326.9h2M607.5 327.4h-1.6M613.5 324.0V329.7M613.5 325.7h2M613.5 328.3h-1.6M618.5 288.0V327.0M618.5 315.3h2M618.5 301.6h-1.6M624.5 283.9V322.8M624.5 303.4h2M624.5 307.2h-1.6M629.5 306.0V328.3M629.5 312.7h2M629.5 322.7h-1.6M635.5 297.8V328.3M635.5 319.2h2M635.5 308.5h-1.6M640.5 277.0V314.4M640.5 295.7h2M640.5 299.4h-1.6M646.5 271.4V283.9M646.5 275.1h2M646.5 280.8h-1.6M652.5 275.5V288.0M652.5 284.2h2M652.5 279.9h-1.6M657.5 278.3V286.7M657.5 282.5h2M657.5 283.3h-1.6M663.5 278.0V302.0M663.5 285.2h2M663.5 296.0h-1.6M668.5 281.0V292.2M668.5 288.8h2M668.5 284.9h-1.6M674.5 279.7V306.0M674.5 292.9h2M674.5 295.5h-1.6M679.5 300.5V308.9M679.5 303.0h2M679.5 306.8h-1.6M685.5 300.5V314.4M685.5 310.2h2M685.5 305.4h-1.6M691.5 306.0V322.8M691.5 314.4h2M691.5 316.1h-1.6M696.5 302.0V314.4M696.5 305.7h2M696.5 311.3h-1.6M702.5 307.5V322.8M702.5 318.2h2M702.5 312.9h-1.6M707.5 307.5V331.0M707.5 319.2h2M707.5 321.6h-1.6M713.5 315.8V331.0M713.5 320.4h2M713.5 327.2h-1.6M718.5 321.4V328.3M718.5 326.2h2M718.5 323.8h-1.6M724.5 325.5V342.2M724.5 333.9h2M724.5 335.5h-1.6M729.5 325.5V339.4M729.5 329.7h2M729.5 335.9h-1.6M735.5 336.7V350.5M735.5 346.4h2M735.5 341.5h-1.6M740.5 322.8V342.2M740.5 332.5h2M740.5 334.4h-1.6M746.5 321.4V343.6M746.5 328.1h2M746.5 338.1h-1.6M752.5 325.5V342.2M752.5 337.2h2M752.5 331.3h-1.6M757.5 318.6V336.7M757.5 327.6h2M757.5 329.5h-1.6M763.5 317.2V331.0M763.5 321.3h2M763.5 327.6h-1.6M768.5 318.6V336.7M768.5 331.3h2M768.5 324.9h-1.6M774.5 332.5V347.8M774.5 340.1h2M774.5 341.7h-1.6M779.5 328.3V336.7M779.5 330.8h2M779.5 334.6h-1.6M785.5 302.0V327.0M785.5 319.5h2M785.5 310.8h-1.6M790.5 311.7V331.0M790.5 321.4h2M790.5 323.3h-1.6M796.5 303.3V320.0M796.5 308.3h2M796.5 315.8h-1.6M802.5 297.8V314.4M802.5 309.4h2M802.5 303.6h-1.6M807.5 282.5V300.5M807.5 291.5h2M807.5 293.3h-1.6M813.5 238.0V286.7M813.5 252.6h2M813.5 274.5h-1.6M818.5 237.6V264.0M818.5 256.1h2M818.5 246.8h-1.6M824.5 246.4V268.6M824.5 257.5h2M824.5 259.7h-1.6M829.5 242.5V279.0M829.5 253.4h2M829.5 269.9h-1.6M835.5 249.8V264.4M835.5 260.0h2M835.5 254.9h-1.6M840.5 245.0V259.5M840.5 252.2h2M840.5 253.7h-1.6M846.5 240.0V274.0M846.5 250.2h2M846.5 265.5h-1.6M851.5 264.0V288.7M851.5 281.3h2M851.5 272.6h-1.6M857.5 262.0V298.0M857.5 280.0h2M857.5 283.6h-1.6M862.5 266.8V283.8M862.5 271.9h2M862.5 279.6h-1.6M868.5 249.8V271.6M868.5 265.1h2M868.5 257.4h-1.6M873.5 247.4V269.2M873.5 258.3h2M873.5 260.5h-1.6M879.5 266.8V279.0M879.5 270.5h2M879.5 275.9h-1.6M888.5 263.0V270.0M888.5 267.9h2M888.5 265.4h-1.6M893.5 259.0V268.6M893.5 263.8h2M893.5 264.8h-1.6M899.5 256.0V264.4M899.5 258.5h2M899.5 262.3h-1.6M905.5 259.0V270.0M905.5 266.7h2M905.5 262.9h-1.6M912.5 239.4V268.6M912.5 254.0h2M912.5 256.9h-1.6M917.5 207.5V253.0M917.5 221.2h2M917.5 241.6h-1.6M922.5 214.4V234.0M922.5 228.1h2M922.5 221.3h-1.6M928.5 214.4V235.0M928.5 224.7h2M928.5 226.8h-1.6M933.5 196.4V231.0M933.5 206.8h2M933.5 222.3h-1.6M939.5 174.0V206.0M939.5 196.4h2M939.5 185.2h-1.6M944.5 150.5V189.4M944.5 169.9h2M944.5 173.8h-1.6M950.5 145.0V203.0M950.5 162.4h2M950.5 188.5h-1.6M955.5 128.0V170.0M955.5 157.4h2M955.5 142.7h-1.6M961.5 125.5V156.0M961.5 140.8h2M961.5 143.8h-1.6M967.5 134.0V166.0M967.5 143.6h2M967.5 158.0h-1.6M972.5 127.0V164.4M972.5 153.2h2M972.5 140.1h-1.6M978.5 127.0V135.0M978.5 131.0h2M978.5 131.8h-1.6M983.5 121.0V135.0M983.5 125.2h2M983.5 131.5h-1.6M989.5 127.0V154.7M989.5 146.4h2M989.5 136.7h-1.6M994.5 132.5V161.7M994.5 147.1h2M994.5 150.0h-1.6M1000.5 134.0V159.0M1000.5 141.5h2M1000.5 152.8h-1.6M1005.5 110.0V135.0M1005.5 127.5h2M1005.5 118.8h-1.6M1011.5 102.0V120.0M1011.5 111.0h2M1011.5 112.8h-1.6M1017.5 92.0V114.4M1017.5 98.7h2M1017.5 108.8h-1.6M1022.5 100.5V116.0M1022.5 111.3h2M1022.5 105.9h-1.6M1028.5 92.0V117.0M1028.5 104.5h2M1028.5 107.0h-1.6M1033.5 93.6V104.7M1033.5 96.9h2M1033.5 101.9h-1.6" stroke="#00d200" stroke-width="1.35" fill="none"/>
<path d="M1036.5 75.6h6.5l-3.25 4z" fill="#9aa4ae"/>
<text x="117" y="83.4" font-family="Liberation Sans" font-size="6.6" fill="#ffffff">XAUUSD,M1&#160;&#160;3325.245 3325.325 3324.955 3325.025</text>
<text x="113.9" y="420.3" font-family="Liberation Sans" font-size="6.45" fill="#ffffff">20 Aug 2025</text><path d="M114.5 411.5v3" stroke="#b8b8b8"/><text x="158.2" y="420.3" font-family="Liberation Sans" font-size="6.45" fill="#ffffff">20 Aug 03:37</text><path d="M159.5 411.5v3" stroke="#b8b8b8"/><text x="202.5" y="420.3" font-family="Liberation Sans" font-size="6.45" fill="#ffffff">20 Aug 03:45</text><path d="M203.5 411.5v3" stroke="#b8b8b8"/><text x="246.8" y="420.3" font-family="Liberation Sans" font-size="6.45" fill="#ffffff">20 Aug 03:53</text><path d="M247.5 411.5v3" stroke="#b8b8b8"/><text x="291.1" y="420.3" font-family="Liberation Sans" font-size="6.45" fill="#ffffff">20 Aug 04:01</text><path d="M292.5 411.5v3" stroke="#b8b8b8"/><text x="335.4" y="420.3" font-family="Liberation Sans" font-size="6.45" fill="#ffffff">20 Aug 04:09</text><path d="M336.5 411.5v3" stroke="#b8b8b8"/><text x="379.7" y="420.3" font-family="Liberation Sans" font-size="6.45" fill="#ffffff">20 Aug 04:17</text><path d="M380.5 411.5v3" stroke="#b8b8b8"/><text x="424.0" y="420.3" font-family="Liberation Sans" font-size="6.45" fill="#ffffff">20 Aug 04:25</text><path d="M424.5 411.5v3" stroke="#b8b8b8"/><text x="468.3" y="420.3" font-family="Liberation Sans" font-size="6.45" fill="#ffffff">20 Aug 04:33</text><path d="M469.5 411.5v3" stroke="#b8b8b8"/><text x="512.6" y="420.3" font-family="Liberation Sans" font-size="6.45" fill="#ffffff">20 Aug 04:41</text><path d="M513.5 411.5v3" stroke="#b8b8b8"/><text x="556.9" y="420.3" font-family="Liberation Sans" font-size="6.45" fill="#ffffff">20 Aug 04:49</text><path d="M557.5 411.5v3" stroke="#b8b8b8"/><text x="601.2" y="420.3" font-family="Liberation Sans" font-size="6.45" fill="#ffffff">20 Aug 04:57</text><path d="M602.5 411.5v3" stroke="#b8b8b8"/><text x="645.5" y="420.3" font-family="Liberation Sans" font-size="6.45" fill="#ffffff">20 Aug 05:05</text><path d="M646.5 411.5v3" stroke="#b8b8b8"/><text x="689.8" y="420.3" font-family="Liberation Sans" font-size="6.45" fill="#ffffff">20 Aug 05:13</text><path d="M690.5 411.5v3" stroke="#b8b8b8"/><text x="734.1" y="420.3" font-family="Liberation Sans" font-size="6.45" fill="#ffffff">20 Aug 05:21</text><path d="M735.5 411.5v3" stroke="#b8b8b8"/><text x="778.4" y="420.3" font-family="Liberation Sans" font-size="6.45" fill="#ffffff">20 Aug 05:29</text><path d="M779.5 411.5v3" stroke="#b8b8b8"/><text x="822.7" y="420.3" font-family="Liberation Sans" font-size="6.45" fill="#ffffff">20 Aug 05:37</text><path d="M823.5 411.5v3" stroke="#b8b8b8"/><text x="867.0" y="420.3" font-family="Liberation Sans" font-size="6.45" fill="#ffffff">20 Aug 05:45</text><path d="M867.5 411.5v3" stroke="#b8b8b8"/><text x="911.3" y="420.3" font-family="Liberation Sans" font-size="6.45" fill="#ffffff">20 Aug 05:53</text><path d="M912.5 411.5v3" stroke="#b8b8b8"/><text x="955.6" y="420.3" font-family="Liberation Sans" font-size="6.45" fill="#ffffff">20 Aug 06:01</text><path d="M956.5 411.5v3" stroke="#b8b8b8"/><text x="999.9" y="420.3" font-family="Liberation Sans" font-size="6.45" fill="#ffffff">20 Aug 06:09</text><path d="M1000.5 411.5v3" stroke="#b8b8b8"/>
<text x="1277.6" y="91.9" font-family="Liberation Sans" font-size="6.8" fill="#ffffff">3</text><path d="M1273.5 89.4h2" stroke="#b8b8b8"/><text x="1277.6" y="114.8" font-family="Liberation Sans" font-size="6.8" fill="#ffffff">3</text><path d="M1273.5 112.2h2" stroke="#b8b8b8"/><text x="1277.6" y="137.6" font-family="Liberation Sans" font-size="6.8" fill="#ffffff">3</text><path d="M1273.5 135.1h2" stroke="#b8b8b8"/><text x="1277.6" y="160.4" font-family="Liberation Sans" font-size="6.8" fill="#ffffff">3</text><path d="M1273.5 157.9h2" stroke="#b8b8b8"/><text x="1277.6" y="183.3" font-family="Liberation Sans" font-size="6.8" fill="#ffffff">3</text><path d="M1273.5 180.8h2" stroke="#b8b8b8"/><text x="1277.6" y="206.1" font-family="Liberation Sans" font-size="6.8" fill="#ffffff">3</text><path d="M1273.5 203.6h2" stroke="#b8b8b8"/><text x="1277.6" y="229.0" font-family="Liberation Sans" font-size="6.8" fill="#ffffff">3</text><path d="M1273.5 226.5h2" stroke="#b8b8b8"/><text x="1277.6" y="251.8" font-family="Liberation Sans" font-size="6.8" fill="#ffffff">3</text><path d="M1273.5 249.3h2" stroke="#b8b8b8"/><text x="1277.6" y="274.7" font-family="Liberation Sans" font-size="6.8" fill="#ffffff">3</text><path d="M1273.5 272.2h2" stroke="#b8b8b8"/><text x="1277.6" y="297.6" font-family="Liberation Sans" font-size="6.8" fill="#ffffff">3</text><path d="M1273.5 295.1h2" stroke="#b8b8b8"/><text x="1277.6" y="320.4" font-family="Liberation Sans" font-size="6.8" fill="#ffffff">3</text><path d="M1273.5 317.9h2" stroke="#b8b8b8"/><text x="1277.6" y="343.3" font-family="Liberation Sans" font-size="6.8" fill="#ffffff">3</text><path d="M1273.5 340.8h2" stroke="#b8b8b8"/><text x="1277.6" y="366.1" font-family="Liberation Sans" font-size="6.8" fill="#ffffff">3</text><path d="M1273.5 363.6h2" stroke="#b8b8b8"/><text x="1277.6" y="389.0" font-family="Liberation Sans" font-size="6.8" fill="#ffffff">3</text><path d="M1273.5 386.5h2" stroke="#b8b8b8"/><text x="1277.6" y="411.8" font-family="Liberation Sans" font-size="6.8" fill="#ffffff">3</text><path d="M1273.5 409.3h2" stroke="#b8b8b8"/>
<rect x="1275" y="100" width="6" height="8.5" fill="#e8e8e8"/>
</svg>
<div class="a" style="left:0;top:425px;width:1280px;height:1px;background:#8a8a8a"></div><div class="a" style="left:0;top:426px;width:1280px;height:2.7px;background:#f4f4f4"></div><div class="a" style="left:0;top:428.7px;width:1280px;height:1px;background:#a9a9a9"></div><div class="a" style="left:0;top:429.7px;width:1280px;height:255.6px;background:#fff"></div><div class="a" style="left:0;top:429.70px;width:1280px;height:13.89px;background:#e9e9e9"></div><div class="a" style="left:0;top:442.79px;width:1280px;height:1px;background:#cfcfcf"></div><div class="a" style="left:0;top:456.68px;width:1280px;height:1px;background:#cfcfcf"></div><div class="a" style="left:0;top:457.48px;width:1280px;height:13.89px;background:#e9e9e9"></div><div class="a" style="left:0;top:470.57px;width:1280px;height:1px;background:#cfcfcf"></div><div class="a" style="left:0;top:484.46px;width:1280px;height:1px;background:#cfcfcf"></div><div class="a" style="left:0;top:485.26px;width:1280px;height:13.89px;background:#e9e9e9"></div><div class="a" style="left:0;top:498.35px;width:1280px;height:1px;background:#cfcfcf"></div><div class="a" style="left:0;top:512.24px;width:1280px;height:1px;background:#cfcfcf"></div><div class="a" style="left:0;top:513.04px;width:1280px;height:13.89px;background:#e9e9e9"></div><div class="a" style="left:0;top:526.13px;width:1280px;height:1px;background:#cfcfcf"></div><div class="a" style="left:0;top:540.02px;width:1280px;height:1px;background:#cfcfcf"></div><div class="a" style="left:0;top:540.82px;width:1280px;height:13.89px;background:#e9e9e9"></div><div class="a" style="left:0;top:553.91px;width:1280px;height:1px;background:#cfcfcf"></div><div class="a" style="left:0;top:567.80px;width:1280px;height:1px;background:#cfcfcf"></div><div class="a" style="left:0;top:568.60px;width:1280px;height:13.89px;background:#e9e9e9"></div><div class="a" style="left:0;top:581.69px;width:1280px;height:1px;background:#cfcfcf"></div><div class="a" style="left:0;top:595.58px;width:1280px;height:1px;background:#cfcfcf"></div><div class="a" style="left:0;top:596.38px;width:1280px;height:13.89px;background:#e9e9e9"></div><div class="a" style="left:0;top:609.47px;width:1280px;height:1px;background:#cfcfcf"></div><div class="t" style="left:-2px;top:432.30px;font-size:8.2px">Bars in test</div><div class="t r" style="left:300px;top:432.30px;width:108.5px;font-size:8.2px;letter-spacing:-0.35px">90866</div><div class="t" style="left:442.5px;top:432.30px;font-size:8.2px">Ticks modelled</div><div class="t r" style="left:700px;top:432.30px;width:155.5px;font-size:8.2px;letter-spacing:-0.35px">19797984</div><div class="t" style="left:889px;top:432.30px;font-size:8.2px">Modelling quality</div><div class="t" style="left:-2px;top:446.19px;font-size:8.2px">Mismatched charts errors</div><div class="t r" style="left:300px;top:446.19px;width:108.5px;font-size:8.2px;letter-spacing:-0.35px">0</div><div class="t" style="left:-2px;top:460.08px;font-size:8.2px">Initial deposit</div><div class="t r" style="left:300px;top:460.08px;width:108.5px;font-size:8.2px;letter-spacing:-0.35px">1000.00</div><div class="t" style="left:889px;top:460.08px;font-size:8.2px">Spread</div><div class="t" style="left:1260.5px;top:460.08px;font-size:8.2px">Curre</div><div class="t" style="left:-2px;top:473.97px;font-size:8.2px">Total net profit</div><div class="t r" style="left:300px;top:473.97px;width:108.5px;font-size:8.2px;letter-spacing:-0.35px">2491.42</div><div class="t" style="left:442.5px;top:473.97px;font-size:8.2px">Gross profit</div><div class="t r" style="left:700px;top:473.97px;width:155.5px;font-size:8.2px;letter-spacing:-0.35px">6189.02</div><div class="t" style="left:889px;top:473.97px;font-size:8.2px">Gross loss</div><div class="t" style="left:1273.7px;top:473.97px;font-size:8.2px">-3</div><div class="t" style="left:-2px;top:487.86px;font-size:8.2px">Profit factor</div><div class="t r" style="left:300px;top:487.86px;width:108.5px;font-size:8.2px;letter-spacing:-0.35px">1.67</div><div class="t" style="left:442.5px;top:487.86px;font-size:8.2px">Expected payoff</div><div class="t r" style="left:700px;top:487.86px;width:155.5px;font-size:8.2px;letter-spacing:-0.35px">2.02</div><div class="t" style="left:-2px;top:501.75px;font-size:8.2px">Absolute drawdown</div><div class="t r" style="left:300px;top:501.75px;width:108.5px;font-size:8.2px;letter-spacing:-0.35px">487.72</div><div class="t" style="left:442.5px;top:501.75px;font-size:8.2px">Maximal drawdown</div><div class="t r" style="left:700px;top:501.75px;width:155.5px;font-size:8.2px;letter-spacing:-0.35px">2110.08 (80.46%)</div><div class="t" style="left:889px;top:501.75px;font-size:8.2px">Relative drawdown</div><div class="t" style="left:1243.3px;top:501.75px;font-size:8.2px">80.46% (2</div><div class="t" style="left:-2px;top:515.64px;font-size:8.2px">Total trades</div><div class="t r" style="left:300px;top:515.64px;width:108.5px;font-size:8.2px;letter-spacing:-0.35px">1232</div><div class="t" style="left:442.5px;top:515.64px;font-size:8.2px">Short positions (won %)</div><div class="t r" style="left:700px;top:515.64px;width:155.5px;font-size:8.2px;letter-spacing:-0.35px">952 (99.68%)</div><div class="t" style="left:889px;top:515.64px;font-size:8.2px">Long positions (won %)</div><div class="t" style="left:1258.4px;top:515.64px;font-size:8.2px">280 (9</div><div class="t" style="left:442.5px;top:529.53px;font-size:8.2px">Profit trades (% of total)</div><div class="t r" style="left:700px;top:529.53px;width:155.5px;font-size:8.2px;letter-spacing:-0.35px">1226 (99.51%)</div><div class="t" style="left:889px;top:529.53px;font-size:8.2px">Loss trades (% of total)</div><div class="t" style="left:1271px;top:529.53px;font-size:8.2px">6 (</div><div class="t r" style="left:300px;top:543.42px;width:108.5px;font-size:8.2px;letter-spacing:0">Largest</div><div class="t" style="left:442.5px;top:543.42px;font-size:8.2px">profit trade</div><div class="t r" style="left:700px;top:543.42px;width:155.5px;font-size:8.2px;letter-spacing:-0.35px">241.78</div><div class="t" style="left:889px;top:543.42px;font-size:8.2px">loss trade</div><div class="t" style="left:1273.7px;top:543.42px;font-size:8.2px">-1</div><div class="t r" style="left:300px;top:557.31px;width:108.5px;font-size:8.2px;letter-spacing:0">Average</div><div class="t" style="left:442.5px;top:557.31px;font-size:8.2px">profit trade</div><div class="t r" style="left:700px;top:557.31px;width:155.5px;font-size:8.2px;letter-spacing:-0.35px">5.05</div><div class="t" style="left:889px;top:557.31px;font-size:8.2px">loss trade</div><div class="t" style="left:1277.6px;top:557.31px;font-size:8.2px">-</div><div class="t r" style="left:300px;top:571.20px;width:108.5px;font-size:8.2px;letter-spacing:0">Maximum</div><div class="t" style="left:442.5px;top:571.20px;font-size:8.2px">consecutive wins (profit in money)</div><div class="t r" style="left:700px;top:571.20px;width:155.5px;font-size:8.2px;letter-spacing:-0.35px">1226 (6189.02)</div><div class="t" style="left:889px;top:571.20px;font-size:8.2px">consecutive losses (loss in money)</div><div class="t" style="left:1261.3px;top:571.20px;font-size:8.2px">6 (-36</div><div class="t r" style="left:300px;top:585.09px;width:108.5px;font-size:8.2px;letter-spacing:0">Maximal</div><div class="t" style="left:442.5px;top:585.09px;font-size:8.2px">consecutive profit (count of wins)</div><div class="t r" style="left:700px;top:585.09px;width:155.5px;font-size:8.2px;letter-spacing:-0.35px">6189.02 (1226)</div><div class="t" style="left:889px;top:585.09px;font-size:8.2px">consecutive loss (count of losses)</div><div class="t" style="left:1261.8px;top:585.09px;font-size:8.2px">-3697</div><div class="t r" style="left:300px;top:598.98px;width:108.5px;font-size:8.2px;letter-spacing:0">Average</div><div class="t" style="left:442.5px;top:598.98px;font-size:8.2px">consecutive wins</div><div class="t r" style="left:700px;top:598.98px;width:155.5px;font-size:8.2px;letter-spacing:-0.35px">1226</div><div class="t" style="left:889px;top:598.98px;font-size:8.2px">consecutive losses</div><div class="a" style="left:441px;top:444.2px;width:840px;height:11.3px;background:#00f000;border-top:1px solid #3aa7a0;border-bottom:1px solid #3aa7a0;border-left:1px solid #3aa7a0"></div>
<svg style="position:absolute;left:0;top:0;pointer-events:none" width="1280" height="720" viewBox="0 0 1280 720">
<g transform="translate(178.0,522.0)" opacity="0.37"><polygon points="0,0 -37.9,37.9 -32.2,43.6 0,11.4 32.2,43.6 37.9,37.9" fill="#a8aab2"/><polygon points="-22.8,30 -15.5,23 -15.5,75.5 -22.8,68.3" fill="#a8aab2"/><polygon points="22.8,30 15.5,23 15.5,75.5 22.8,68.3" fill="#a8aab2"/><polygon points="-3.9,9 3.6,9 3.6,88 -0.15,92.4 -3.9,88" fill="#a8aab2"/><rect x="-15.5" y="44.3" width="31" height="7.6" fill="#a8aab2"/><path d="M-46.6,101L-41.8,106.6L-37,101M-41.8,106.6V112.2M-21.25,106.1A4.95,4.95 0 1 0 -31.15,106.1A4.95,4.95 0 1 0 -21.25,106.1M-7.1,101.2H-13.2V112.2M-13.2,106.4H-8M5.9,106.1A5.1,5.1 0 1 0 -4.3,106.1A5.1,5.1 0 1 0 5.9,106.1M13.2,112.2V101.2H16.6A3.2,3.2 0 0 1 16.6,107.6H13.2M16.4,107.6L20.8,112.2M33.9,101.2H27V111H33.9M27,106.1H33.2M37,100.9L47.2,112.2M47.2,100.9L37,112.2" fill="none" stroke="#a8aab2" stroke-width="2.6"/></g>
<g transform="translate(713.5,530.0)" opacity="0.37"><polygon points="0,0 -37.9,37.9 -32.2,43.6 0,11.4 32.2,43.6 37.9,37.9" fill="#a8aab2"/><polygon points="-22.8,30 -15.5,23 -15.5,75.5 -22.8,68.3" fill="#a8aab2"/><polygon points="22.8,30 15.5,23 15.5,75.5 22.8,68.3" fill="#a8aab2"/><polygon points="-3.9,9 3.6,9 3.6,88 -0.15,92.4 -3.9,88" fill="#a8aab2"/><rect x="-15.5" y="44.3" width="31" height="7.6" fill="#a8aab2"/><path d="M-46.6,101L-41.8,106.6L-37,101M-41.8,106.6V112.2M-21.25,106.1A4.95,4.95 0 1 0 -31.15,106.1A4.95,4.95 0 1 0 -21.25,106.1M-7.1,101.2H-13.2V112.2M-13.2,106.4H-8M5.9,106.1A5.1,5.1 0 1 0 -4.3,106.1A5.1,5.1 0 1 0 5.9,106.1M13.2,112.2V101.2H16.6A3.2,3.2 0 0 1 16.6,107.6H13.2M16.4,107.6L20.8,112.2M33.9,101.2H27V111H33.9M27,106.1H33.2M37,100.9L47.2,112.2M47.2,100.9L37,112.2" fill="none" stroke="#a8aab2" stroke-width="2.6"/></g>
<g transform="translate(1159.6,546.7)" opacity="0.37"><polygon points="0,0 -37.9,37.9 -32.2,43.6 0,11.4 32.2,43.6 37.9,37.9" fill="#a8aab2"/><polygon points="-22.8,30 -15.5,23 -15.5,75.5 -22.8,68.3" fill="#a8aab2"/><polygon points="22.8,30 15.5,23 15.5,75.5 22.8,68.3" fill="#a8aab2"/><polygon points="-3.9,9 3.6,9 3.6,88 -0.15,92.4 -3.9,88" fill="#a8aab2"/><rect x="-15.5" y="44.3" width="31" height="7.6" fill="#a8aab2"/><path d="M-46.6,101L-41.8,106.6L-37,101M-41.8,106.6V112.2M-21.25,106.1A4.95,4.95 0 1 0 -31.15,106.1A4.95,4.95 0 1 0 -21.25,106.1M-7.1,101.2H-13.2V112.2M-13.2,106.4H-8M5.9,106.1A5.1,5.1 0 1 0 -4.3,106.1A5.1,5.1 0 1 0 5.9,106.1M13.2,112.2V101.2H16.6A3.2,3.2 0 0 1 16.6,107.6H13.2M16.4,107.6L20.8,112.2M33.9,101.2H27V111H33.9M27,106.1H33.2M37,100.9L47.2,112.2M47.2,100.9L37,112.2" fill="none" stroke="#a8aab2" stroke-width="2.6"/></g>
</svg>
<div class="t" style="left:1082px;top:650px;font-size:13.7px;line-height:14px;color:rgba(120,120,120,0.5)">Activate Windows</div>
<div class="t" style="left:1082px;top:666.8px;font-size:10.35px;line-height:12px;color:rgba(120,120,120,0.5)">Go to Settings to activate Windows.</div>
<div class="a" style="left:0;top:685.3px;width:1280px;height:1.6px;background:#6a6a6a"></div><div class="a" style="left:0;top:686.9px;width:1280px;height:15.5px;background:#f0f0f0"></div><div class="a" style="left:112.5px;top:685.3px;width:38px;height:14px;background:#fff;border-left:1.5px solid #555;border-right:1.5px solid #555;border-bottom:1.5px solid #555"></div><div class="t" style="left:0.8px;top:687.6px;font-size:8.3px;color:#8a8a8a">Settings</div><div class="t" style="left:43.75px;top:687.6px;font-size:8.3px;color:#8a8a8a">Results</div><div class="t" style="left:83.6px;top:687.6px;font-size:8.3px;color:#8a8a8a">Graph</div><div class="t" style="left:119.5px;top:687.6px;font-size:8.3px;color:#1a1a1a">Report</div><div class="t" style="left:157px;top:687.6px;font-size:8.3px;color:#8a8a8a">Journal</div><div class="a" style="left:36.8px;top:688.5px;width:1px;height:9px;background:#9a9a9a"></div><div class="a" style="left:75.9px;top:688.5px;width:1px;height:9px;background:#9a9a9a"></div><div class="a" style="left:189.9px;top:688.5px;width:1px;height:9px;background:#9a9a9a"></div><div class="a" style="left:0;top:702.3px;width:1280px;height:1px;background:#c6c6c6"></div><div class="a" style="left:0;top:703.3px;width:1280px;height:11px;background:#f0f0f0"></div><div class="t" style="left:-1px;top:707.5px;font-size:7.7px;color:#1a1a1a">Help, press F1</div><div class="a" style="left:816.4px;top:704.5px;width:1px;height:10px;background:#b8b8b8"></div><div class="a" style="left:896px;top:704.5px;width:1px;height:10px;background:#b8b8b8"></div><div class="a" style="left:967.5px;top:704.5px;width:1px;height:10px;background:#b8b8b8"></div><div class="a" style="left:1016px;top:704.5px;width:1px;height:10px;background:#b8b8b8"></div><div class="a" style="left:1065px;top:704.5px;width:1px;height:10px;background:#b8b8b8"></div><div class="a" style="left:1112.5px;top:704.5px;width:1px;height:10px;background:#b8b8b8"></div><div class="a" style="left:1160px;top:704.5px;width:1px;height:10px;background:#b8b8b8"></div><div class="a" style="left:1207.5px;top:704.5px;width:1px;height:10px;background:#b8b8b8"></div><div class="t" style="left:820.3px;top:707.5px;font-size:8.3px;color:#1a1a1a">Default</div><div class="a" style="left:1210px;top:708px;width:16px;height:6px;background:repeating-linear-gradient(90deg,#4a9a30 0 1.5px,transparent 1.5px 2.5px)"></div><div class="t" style="left:1229px;top:707.5px;font-size:8.3px;color:#1a1a1a">7887/10 kb</div><div class="a" style="left:0;top:714.3px;width:1280px;height:6px;background:#dde0ea"></div><div class="a" style="left:751px;top:716.5px;width:26px;height:5px;background:#f6f6f8;border-radius:2px"></div><div class="a" style="left:780px;top:716.5px;width:28px;height:5px;background:#eea6a6;border-radius:2px"></div><div class="a" style="left:799px;top:717px;width:6px;height:4px;background:#e03030;border-radius:3px"></div><div class="a" style="left:0;top:717px;width:5px;height:4px;background:#d03030;border-radius:3px"></div><div class="a" style="left:859px;top:717px;width:5px;height:5px;background:#e89050;border-radius:3px"></div><div class="a" style="left:889px;top:716.5px;width:6px;height:6px;background:#f4f4f6;border:1px solid #c8c8cc;border-radius:4px"></div>
</body></html>
